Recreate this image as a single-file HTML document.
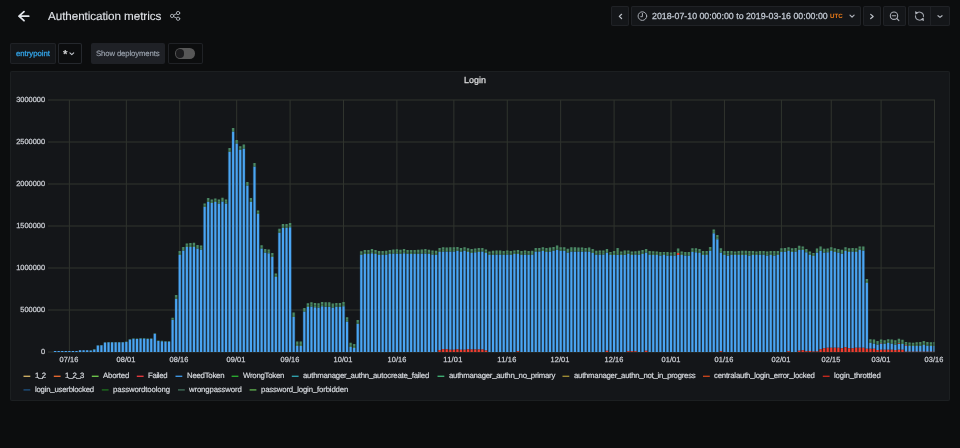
<!DOCTYPE html>
<html lang="en"><head><meta charset="utf-8"><title>Authentication metrics - Grafana</title>
<style>
html,body{margin:0;padding:0;overflow:hidden}
body{width:960px;height:448px;overflow:hidden;position:relative;background:#0c0d0e;font-family:"Liberation Sans",sans-serif;}
.t{position:absolute;white-space:nowrap;will-change:transform;text-rendering:geometricPrecision;}
.b{position:absolute;box-sizing:border-box;}
.t i{font-style:normal;position:relative;top:-0.7px}
svg{position:absolute;left:0;top:0;overflow:visible}
</style></head><body>

<!-- navbar -->
<svg width="960" height="40" viewBox="0 0 960 40" fill="none" stroke-linecap="round" stroke-linejoin="round">
<g stroke="#e4e7ec" stroke-width="1.75"><path d="M28.7 16.2H19M24.0 11.7l-5 4.5 5 4.5"/></g>
<g stroke="#adb1b8" stroke-width="0.95"><circle cx="172.1" cy="15.9" r="1.65"/><circle cx="178.1" cy="13.05" r="1.65"/><circle cx="178.1" cy="18.75" r="1.65"/><path d="M173.7 15.1l2.8-1.35M173.7 16.7l2.8 1.35"/></g>
</svg>
<div class="t" style="font-size:11.7px;line-height:11.7px;top:10.80px;color:#e0e3e8;letter-spacing:-0.080px;-webkit-text-stroke:0.1px #e0e3e8;left:47.80px;"><span id="title">Authentication metrics</span></div>
<div class="b" style="left:611.25px;top:6.00px;width:17.75px;height:20.00px;background:#141619;border-radius:2px;box-shadow:inset 0 0 0 1px #202226;"></div>
<div class="b" style="left:631.25px;top:6.00px;width:229.35px;height:20.00px;background:#141619;border-radius:2px;box-shadow:inset 0 0 0 1px #202226;"></div>
<div class="b" style="left:863.00px;top:6.00px;width:17.60px;height:20.00px;background:#141619;border-radius:2px;box-shadow:inset 0 0 0 1px #202226;"></div>
<div class="b" style="left:883.00px;top:6.00px;width:22.60px;height:20.00px;background:#141619;border-radius:2px;box-shadow:inset 0 0 0 1px #202226;"></div>
<div class="b" style="left:908.00px;top:6.00px;width:41.80px;height:20.00px;background:#141619;border-radius:2px;box-shadow:inset 0 0 0 1px #202226;"></div>
<div class="b" style="left:930.20px;top:6.00px;width:1.00px;height:20.00px;background:#202226;border-radius:0px;"></div>
<div class="t" style="font-size:8.8px;line-height:8.8px;top:11.55px;color:#c4cbd5;letter-spacing:0.003px;-webkit-text-stroke:0.25px #c4cbd5;left:651.75px;"><span id="time">2018-07-10 00:00:00 to 2019-03-16 00:00:00</span></div>
<div class="t" style="font-size:6.2px;line-height:6.2px;top:13.65px;color:#eb7b18;letter-spacing:-0.059px;font-weight:bold;left:829.90px;"><span id="utc">UTC</span></div>
<svg width="960" height="40" viewBox="0 0 960 40" fill="none" stroke-linecap="round" stroke-linejoin="round">
<g stroke="#bcc0c7" stroke-width="1.2"><path d="M621.6 14.3l-2.3 2.1 2.3 2.1"/><path d="M870.7 14.4l2.5 2.05-2.5 2.05"/></g>
<g stroke="#aeb2ba" stroke-width="1.2"><path d="M850 15.1l2.05 2 2.05-2"/><path d="M938.0 15.7l2 1.7 2-1.7"/></g>
<g stroke="#a9adb5" stroke-width="1"><circle cx="642.4" cy="16.1" r="4.3"/><path d="M642.4 13.4v3.3h-1.6"/></g>
<g stroke="#a9adb5" stroke-width="1.1"><circle cx="894" cy="15.7" r="3.7"/><path d="M892.3 15.7h3.4M896.8 18.5l2.1 2.2"/></g>
<g stroke="#9ea2aa" stroke-width="1.1" stroke-linecap="butt"><path d="M916.22 13.81A4 4 0 0 1 923.44 16.79"/><path d="M922.78 18.39A4 4 0 0 1 915.56 15.41"/></g>
<g fill="#b0b4bb" stroke="none"><path d="M915 11.2l3.3 1.3-2.8 2.3z"/><path d="M924 21l-3.3-1.3 2.8-2.3z"/></g>
</svg>
<!-- variables -->
<div class="b" style="left:10.00px;top:43.25px;width:45.60px;height:20.25px;background:#141619;border-radius:2px;box-shadow:inset 0 0 0 1px #202226;"></div>
<div class="b" style="left:57.75px;top:43.25px;width:24.15px;height:20.25px;background:#0c0d0e;border-radius:2px;box-shadow:inset 0 0 0 1px #25282d;"></div>
<div class="b" style="left:91.00px;top:43.25px;width:74.00px;height:20.25px;background:#1f2126;border-radius:2px;"></div>
<div class="b" style="left:167.50px;top:43.25px;width:35.25px;height:20.25px;background:#0c0d0e;border-radius:2px;box-shadow:inset 0 0 0 1px #202226;"></div>
<div class="b" style="left:174.75px;top:48.25px;width:20.50px;height:10.50px;background:#575757;border-radius:5.25px;"></div>
<div class="b" style="left:175.60px;top:49.30px;width:8.40px;height:8.40px;background:#1c1c1e;border-radius:4.2px;"></div>
<div class="t" style="font-size:7.75px;line-height:7.75px;top:49.94px;color:#33a2e5;letter-spacing:-0.005px;-webkit-text-stroke:0.3px #33a2e5;left:15.70px;"><span id="entry">entrypoint</span></div>
<div class="t" style="font-size:11.5px;line-height:11.5px;top:49.57px;color:#d8d9da;letter-spacing:0.000px;-webkit-text-stroke:0.3px #d8d9da;left:63.20px;"><span id="star">*</span></div>
<div class="t" style="font-size:7.75px;line-height:7.75px;top:49.94px;color:#9aa2ad;letter-spacing:-0.126px;-webkit-text-stroke:0.15px #9aa2ad;left:96.10px;"><span id="showdep">Show deployments</span></div>
<svg width="960" height="80" viewBox="0 0 960 80" fill="none" stroke-linecap="round" stroke-linejoin="round">
<path d="M69.9 52.9l1.9 1.7 1.9-1.7" stroke="#c3c7ce" stroke-width="1.1"/></svg>
<!-- panel -->
<div class="b" style="left:10.00px;top:71.00px;width:940.00px;height:330.00px;background:#141619;border-radius:2px;box-shadow:inset 0 0 0 1px #1c1f21;"></div>
<div class="t" style="font-size:8.9px;line-height:8.9px;top:76.47px;color:#d8d9da;letter-spacing:0.008px;-webkit-text-stroke:0.3px #d8d9da;left:374.60px;width:200px;text-align:center;"><span id="ptitle">Login</span></div>
<svg width="960" height="448" viewBox="0 0 960 448">
<g stroke="#30342e" stroke-width="1" fill="none">
<path d="M48.0 100H935.0"/>
<path d="M48.0 142H935.0"/>
<path d="M48.0 184H935.0"/>
<path d="M48.0 226H935.0"/>
<path d="M48.0 268H935.0"/>
<path d="M48.0 310H935.0"/>
<path d="M48.0 352H935.0"/>
<path d="M69.36 100V352"/>
<path d="M126.33 100V352"/>
<path d="M179.73 100V352"/>
<path d="M236.69 100V352"/>
<path d="M290.10 100V352"/>
<path d="M343.50 100V352"/>
<path d="M396.90 100V352"/>
<path d="M453.87 100V352"/>
<path d="M507.27 100V352"/>
<path d="M560.67 100V352"/>
<path d="M614.08 100V352"/>
<path d="M671.04 100V352"/>
<path d="M724.45 100V352"/>
<path d="M781.41 100V352"/>
<path d="M831.25 100V352"/>
<path d="M881.10 100V352"/>
<path d="M934.50 100V352"/>
</g>
<clipPath id="pc"><rect x="48.0" y="90" width="886.40" height="263"/></clipPath>
<g clip-path="url(#pc)">
<g opacity="0.18"><path fill="#4aa5f3" d="M53.34 351.00h3.56V352.00h-3.56zM56.90 351.00h3.56V352.00h-3.56zM60.46 351.00h3.56V352.00h-3.56zM64.02 351.00h3.56V352.00h-3.56zM67.58 351.00h3.56V352.00h-3.56zM71.14 351.00h3.56V352.00h-3.56zM74.70 351.00h3.56V352.00h-3.56zM78.26 350.25h3.56V352.00h-3.56zM81.82 350.25h3.56V352.00h-3.56zM85.38 350.25h3.56V352.00h-3.56zM88.94 350.60h3.56V352.00h-3.56zM92.50 349.45h3.56V352.00h-3.56zM96.06 345.60h3.56V352.00h-3.56zM99.62 345.35h3.56V352.00h-3.56zM103.18 342.60h3.56V352.00h-3.56zM106.74 342.25h3.56V352.00h-3.56zM110.30 342.25h3.56V352.00h-3.56zM113.86 342.35h3.56V352.00h-3.56zM117.42 342.25h3.56V352.00h-3.56zM120.99 342.35h3.56V352.00h-3.56zM124.55 341.95h3.56V352.00h-3.56zM128.11 339.50h3.56V352.00h-3.56zM131.67 338.75h3.56V352.00h-3.56zM135.23 339.00h3.56V352.00h-3.56zM138.79 338.50h3.56V352.00h-3.56zM142.35 338.50h3.56V352.00h-3.56zM145.91 339.10h3.56V352.00h-3.56zM149.47 338.75h3.56V352.00h-3.56zM153.03 333.75h3.56V352.00h-3.56zM156.59 341.00h3.56V352.00h-3.56zM160.15 341.25h3.56V352.00h-3.56zM163.71 341.40h3.56V352.00h-3.56zM167.27 341.50h3.56V352.00h-3.56zM170.83 319.75h3.56V352.00h-3.56zM174.39 298.80h3.56V352.00h-3.56zM177.95 254.90h3.56V352.00h-3.56zM181.51 250.60h3.56V352.00h-3.56zM185.07 247.10h3.56V352.00h-3.56zM188.63 246.90h3.56V352.00h-3.56zM192.19 246.90h3.56V352.00h-3.56zM195.75 248.60h3.56V352.00h-3.56zM199.31 249.40h3.56V352.00h-3.56zM202.87 206.70h3.56V352.00h-3.56zM206.43 201.70h3.56V352.00h-3.56zM209.99 203.05h3.56V352.00h-3.56zM213.55 202.05h3.56V352.00h-3.56zM217.11 203.40h3.56V352.00h-3.56zM220.67 201.40h3.56V352.00h-3.56zM224.23 203.40h3.56V352.00h-3.56zM227.79 151.80h3.56V352.00h-3.56zM231.35 131.40h3.56V352.00h-3.56zM234.91 143.40h3.56V352.00h-3.56zM238.47 149.80h3.56V352.00h-3.56zM242.03 148.50h3.56V352.00h-3.56zM245.59 185.60h3.56V352.00h-3.56zM249.15 201.70h3.56V352.00h-3.56zM252.71 166.50h3.56V352.00h-3.56zM256.27 213.90h3.56V352.00h-3.56zM259.83 248.60h3.56V352.00h-3.56zM263.39 252.40h3.56V352.00h-3.56zM266.95 253.30h3.56V352.00h-3.56zM270.52 256.90h3.56V352.00h-3.56zM274.08 277.10h3.56V352.00h-3.56zM277.64 232.70h3.56V352.00h-3.56zM281.20 227.70h3.56V352.00h-3.56zM284.76 227.70h3.56V352.00h-3.56zM288.32 227.20h3.56V352.00h-3.56zM291.88 316.90h3.56V352.00h-3.56zM295.44 346.10h3.56V352.00h-3.56zM299.00 346.10h3.56V352.00h-3.56zM302.56 311.50h3.56V352.00h-3.56zM306.12 306.90h3.56V352.00h-3.56zM309.68 306.50h3.56V352.00h-3.56zM313.24 307.20h3.56V352.00h-3.56zM316.80 307.50h3.56V352.00h-3.56zM320.36 306.25h3.56V352.00h-3.56zM323.92 306.75h3.56V352.00h-3.56zM327.48 306.75h3.56V352.00h-3.56zM331.04 307.60h3.56V352.00h-3.56zM334.60 306.75h3.56V352.00h-3.56zM338.16 306.75h3.56V352.00h-3.56zM341.72 306.25h3.56V352.00h-3.56zM345.28 321.50h3.56V352.00h-3.56zM348.84 346.90h3.56V352.00h-3.56zM352.40 348.10h3.56V352.00h-3.56zM355.96 323.80h3.56V352.00h-3.56zM359.52 254.75h3.56V352.00h-3.56zM363.08 253.88h3.56V352.00h-3.56zM366.64 253.88h3.56V352.00h-3.56zM370.20 253.25h3.56V352.00h-3.56zM373.76 253.88h3.56V352.00h-3.56zM377.32 254.75h3.56V352.00h-3.56zM380.88 254.75h3.56V352.00h-3.56zM384.44 254.50h3.56V352.00h-3.56zM388.00 253.88h3.56V352.00h-3.56zM391.56 253.50h3.56V352.00h-3.56zM395.12 253.50h3.56V352.00h-3.56zM398.68 253.75h3.56V352.00h-3.56zM402.24 253.25h3.56V352.00h-3.56zM405.80 253.75h3.56V352.00h-3.56zM409.36 253.88h3.56V352.00h-3.56zM412.92 253.75h3.56V352.00h-3.56zM416.49 253.75h3.56V352.00h-3.56zM420.05 253.50h3.56V352.00h-3.56zM423.61 253.50h3.56V352.00h-3.56zM427.17 253.75h3.56V352.00h-3.56zM430.73 254.38h3.56V352.00h-3.56zM434.29 254.75h3.56V352.00h-3.56zM437.85 251.88h3.56V350.10h-3.56zM441.41 251.38h3.56V349.30h-3.56zM444.97 251.62h3.56V349.30h-3.56zM448.53 251.62h3.56V349.80h-3.56zM452.09 251.38h3.56V349.80h-3.56zM455.65 250.75h3.56V349.30h-3.56zM459.21 251.62h3.56V349.80h-3.56zM462.77 250.75h3.56V349.80h-3.56zM466.33 252.00h3.56V349.30h-3.56zM469.89 252.88h3.56V349.60h-3.56zM473.45 252.25h3.56V349.60h-3.56zM477.01 251.88h3.56V349.60h-3.56zM480.57 251.62h3.56V349.60h-3.56zM484.13 252.88h3.56V350.60h-3.56zM487.69 254.75h3.56V352.00h-3.56zM491.25 254.75h3.56V352.00h-3.56zM494.81 254.50h3.56V352.00h-3.56zM498.37 254.50h3.56V352.00h-3.56zM501.93 254.75h3.56V352.00h-3.56zM505.49 254.50h3.56V352.00h-3.56zM509.05 254.75h3.56V352.00h-3.56zM512.61 254.12h3.56V352.00h-3.56zM516.17 253.88h3.56V351.35h-3.56zM519.73 254.75h3.56V352.00h-3.56zM523.29 254.38h3.56V352.00h-3.56zM526.85 254.75h3.56V352.00h-3.56zM530.41 254.50h3.56V352.00h-3.56zM533.97 251.62h3.56V352.00h-3.56zM537.53 251.62h3.56V352.00h-3.56zM541.09 251.00h3.56V352.00h-3.56zM544.65 251.88h3.56V352.00h-3.56zM548.21 251.62h3.56V352.00h-3.56zM551.77 250.75h3.56V352.00h-3.56zM555.33 249.75h3.56V352.00h-3.56zM558.89 250.75h3.56V352.00h-3.56zM562.45 250.75h3.56V352.00h-3.56zM566.02 252.62h3.56V352.00h-3.56zM569.58 251.62h3.56V352.00h-3.56zM573.14 251.62h3.56V352.00h-3.56zM576.70 251.62h3.56V352.00h-3.56zM580.26 251.38h3.56V352.00h-3.56zM583.82 251.62h3.56V352.00h-3.56zM587.38 251.38h3.56V352.00h-3.56zM590.94 252.88h3.56V352.00h-3.56zM594.50 254.75h3.56V352.00h-3.56zM598.06 254.38h3.56V352.00h-3.56zM601.62 254.38h3.56V352.00h-3.56zM605.18 252.62h3.56V350.85h-3.56zM608.74 255.00h3.56V352.00h-3.56zM612.30 255.00h3.56V352.00h-3.56zM615.86 254.75h3.56V352.00h-3.56zM619.42 255.12h3.56V352.00h-3.56zM622.98 254.75h3.56V352.00h-3.56zM626.54 254.12h3.56V351.35h-3.56zM630.10 255.00h3.56V351.35h-3.56zM633.66 254.50h3.56V351.35h-3.56zM637.22 254.38h3.56V352.00h-3.56zM640.78 253.88h3.56V352.00h-3.56zM644.34 252.62h3.56V350.85h-3.56zM647.90 254.75h3.56V352.00h-3.56zM651.46 255.00h3.56V352.00h-3.56zM655.02 255.12h3.56V352.00h-3.56zM658.58 255.38h3.56V352.00h-3.56zM662.14 255.12h3.56V352.00h-3.56zM665.70 255.38h3.56V352.00h-3.56zM669.26 255.62h3.56V352.00h-3.56zM672.82 255.38h3.56V352.00h-3.56zM676.38 255.12h3.56V352.00h-3.56zM679.94 255.00h3.56V352.00h-3.56zM683.50 255.50h3.56V352.00h-3.56zM687.06 255.50h3.56V352.00h-3.56zM690.62 252.00h3.56V352.00h-3.56zM694.18 252.25h3.56V352.00h-3.56zM697.74 252.88h3.56V352.00h-3.56zM701.30 254.88h3.56V352.00h-3.56zM704.86 255.12h3.56V352.00h-3.56zM708.42 250.75h3.56V352.00h-3.56zM711.99 233.25h3.56V352.00h-3.56zM715.55 239.25h3.56V352.00h-3.56zM719.11 252.38h3.56V351.15h-3.56zM722.67 254.88h3.56V352.00h-3.56zM726.23 255.38h3.56V352.00h-3.56zM729.79 254.75h3.56V352.00h-3.56zM733.35 255.12h3.56V352.00h-3.56zM736.91 254.88h3.56V352.00h-3.56zM740.47 254.88h3.56V352.00h-3.56zM744.03 254.88h3.56V352.00h-3.56zM747.59 255.38h3.56V352.00h-3.56zM751.15 255.12h3.56V352.00h-3.56zM754.71 255.12h3.56V352.00h-3.56zM758.27 254.50h3.56V352.00h-3.56zM761.83 254.75h3.56V352.00h-3.56zM765.39 255.50h3.56V352.00h-3.56zM768.95 255.12h3.56V352.00h-3.56zM772.51 255.38h3.56V352.00h-3.56zM776.07 255.12h3.56V352.00h-3.56zM779.63 252.00h3.56V352.00h-3.56zM783.19 251.62h3.56V352.00h-3.56zM786.75 251.00h3.56V351.15h-3.56zM790.31 252.00h3.56V352.00h-3.56zM793.87 251.62h3.56V352.00h-3.56zM797.43 249.75h3.56V350.85h-3.56zM800.99 250.12h3.56V350.35h-3.56zM804.55 252.25h3.56V351.15h-3.56zM808.11 254.75h3.56V350.95h-3.56zM811.67 256.00h3.56V351.55h-3.56zM815.23 252.62h3.56V351.55h-3.56zM818.79 250.75h3.56V349.25h-3.56zM822.35 252.62h3.56V348.25h-3.56zM825.91 252.25h3.56V347.75h-3.56zM829.47 251.00h3.56V347.75h-3.56zM833.03 251.88h3.56V347.75h-3.56zM836.59 252.62h3.56V347.75h-3.56zM840.15 253.50h3.56V348.25h-3.56zM843.71 251.00h3.56V347.35h-3.56zM847.27 252.00h3.56V348.25h-3.56zM850.83 251.62h3.56V348.25h-3.56zM854.39 251.88h3.56V347.75h-3.56zM857.95 250.12h3.56V347.75h-3.56zM861.52 250.62h3.56V347.75h-3.56zM865.08 282.88h3.56V348.75h-3.56zM868.64 342.77h3.56V348.75h-3.56zM872.20 343.50h3.56V348.75h-3.56zM875.76 344.52h3.56V349.95h-3.56zM879.32 343.50h3.56V349.65h-3.56zM882.88 343.79h3.56V349.65h-3.56zM886.44 343.06h3.56V349.65h-3.56zM890.00 343.50h3.56V349.65h-3.56zM893.56 344.52h3.56V349.95h-3.56zM897.12 343.94h3.56V349.65h-3.56zM900.68 343.94h3.56V349.65h-3.56zM904.24 345.40h3.56V351.80h-3.56zM907.80 345.98h3.56V351.80h-3.56zM911.36 345.98h3.56V351.80h-3.56zM914.92 345.98h3.56V351.80h-3.56zM918.48 345.69h3.56V351.80h-3.56zM922.04 344.96h3.56V351.80h-3.56zM925.60 345.69h3.56V351.80h-3.56zM929.16 345.98h3.56V351.80h-3.56zM932.72 345.98h3.56V351.80h-3.56z"/><path fill="#4b8965" d="M88.94 350.25h3.56V350.46h-3.56zM92.50 349.10h3.56V349.31h-3.56zM96.06 345.25h3.56V345.46h-3.56zM99.62 345.00h3.56V345.21h-3.56zM103.18 342.25h3.56V342.46h-3.56zM106.74 341.90h3.56V342.11h-3.56zM110.30 341.90h3.56V342.11h-3.56zM113.86 342.00h3.56V342.21h-3.56zM117.42 341.90h3.56V342.11h-3.56zM120.99 342.00h3.56V342.21h-3.56zM124.55 341.60h3.56V341.81h-3.56zM128.11 339.00h3.56V339.30h-3.56zM131.67 338.25h3.56V338.55h-3.56zM135.23 338.50h3.56V338.80h-3.56zM138.79 338.00h3.56V338.30h-3.56zM142.35 338.00h3.56V338.30h-3.56zM145.91 338.60h3.56V338.90h-3.56zM149.47 338.25h3.56V338.55h-3.56zM153.03 333.25h3.56V333.55h-3.56zM156.59 340.50h3.56V340.80h-3.56zM160.15 340.75h3.56V341.05h-3.56zM163.71 340.90h3.56V341.20h-3.56zM167.27 341.00h3.56V341.30h-3.56zM170.83 317.70h3.56V318.93h-3.56zM174.39 295.10h3.56V297.32h-3.56zM177.95 251.10h3.56V253.38h-3.56zM181.51 246.90h3.56V249.12h-3.56zM185.07 243.60h3.56V245.70h-3.56zM188.63 243.05h3.56V245.36h-3.56zM192.19 242.70h3.56V245.22h-3.56zM195.75 244.90h3.56V247.12h-3.56zM199.31 245.40h3.56V247.80h-3.56zM202.87 203.40h3.56V205.38h-3.56zM206.43 198.00h3.56V200.22h-3.56zM209.99 199.50h3.56V201.63h-3.56zM213.55 198.40h3.56V200.59h-3.56zM217.11 199.50h3.56V201.84h-3.56zM220.67 197.70h3.56V199.92h-3.56zM224.23 199.50h3.56V201.84h-3.56zM227.79 148.10h3.56V150.32h-3.56zM231.35 127.90h3.56V130.00h-3.56zM234.91 140.10h3.56V142.08h-3.56zM238.47 146.30h3.56V148.40h-3.56zM242.03 144.60h3.56V146.94h-3.56zM245.59 181.90h3.56V184.12h-3.56zM249.15 197.90h3.56V200.18h-3.56zM252.71 163.00h3.56V165.10h-3.56zM256.27 210.40h3.56V212.50h-3.56zM259.83 245.20h3.56V247.24h-3.56zM263.39 248.90h3.56V251.00h-3.56zM266.95 249.40h3.56V251.74h-3.56zM270.52 253.10h3.56V255.38h-3.56zM274.08 273.40h3.56V275.62h-3.56zM277.64 228.80h3.56V231.14h-3.56zM281.20 224.00h3.56V226.22h-3.56zM284.76 224.00h3.56V226.22h-3.56zM288.32 223.10h3.56V225.56h-3.56zM291.88 312.40h3.56V315.10h-3.56zM295.44 341.50h3.56V344.26h-3.56zM299.00 341.50h3.56V344.26h-3.56zM302.56 308.00h3.56V310.10h-3.56zM306.12 303.20h3.56V305.42h-3.56zM309.68 302.30h3.56V304.82h-3.56zM313.24 303.00h3.56V305.52h-3.56zM316.80 303.20h3.56V305.78h-3.56zM320.36 302.10h3.56V304.59h-3.56zM323.92 302.20h3.56V304.93h-3.56zM327.48 302.20h3.56V304.93h-3.56zM331.04 303.40h3.56V305.92h-3.56zM334.60 302.90h3.56V305.21h-3.56zM338.16 302.90h3.56V305.21h-3.56zM341.72 302.10h3.56V304.59h-3.56zM345.28 317.30h3.56V319.82h-3.56zM348.84 342.70h3.56V345.22h-3.56zM352.40 343.90h3.56V346.42h-3.56zM355.96 320.10h3.56V322.32h-3.56zM359.52 251.25h3.56V253.35h-3.56zM363.08 250.12h3.56V252.38h-3.56zM366.64 250.12h3.56V252.38h-3.56zM370.20 249.12h3.56V251.60h-3.56zM373.76 250.12h3.56V252.38h-3.56zM377.32 251.00h3.56V253.25h-3.56zM380.88 251.00h3.56V253.25h-3.56zM384.44 250.75h3.56V253.00h-3.56zM388.00 250.12h3.56V252.38h-3.56zM391.56 249.50h3.56V251.90h-3.56zM395.12 249.25h3.56V251.80h-3.56zM398.68 249.75h3.56V252.15h-3.56zM402.24 249.12h3.56V251.60h-3.56zM405.80 250.00h3.56V252.25h-3.56zM409.36 250.12h3.56V252.38h-3.56zM412.92 250.00h3.56V252.25h-3.56zM416.49 249.75h3.56V252.15h-3.56zM420.05 249.50h3.56V251.90h-3.56zM423.61 249.12h3.56V251.75h-3.56zM427.17 249.75h3.56V252.15h-3.56zM430.73 250.38h3.56V252.78h-3.56zM434.29 250.75h3.56V253.15h-3.56zM437.85 248.12h3.56V250.38h-3.56zM441.41 247.25h3.56V249.72h-3.56zM444.97 247.62h3.56V250.03h-3.56zM448.53 247.25h3.56V249.88h-3.56zM452.09 247.25h3.56V249.72h-3.56zM455.65 247.00h3.56V249.25h-3.56zM459.21 248.12h3.56V250.22h-3.56zM462.77 247.25h3.56V249.35h-3.56zM466.33 248.25h3.56V250.50h-3.56zM469.89 249.12h3.56V251.38h-3.56zM473.45 248.50h3.56V250.75h-3.56zM477.01 248.12h3.56V250.38h-3.56zM480.57 248.12h3.56V250.22h-3.56zM484.13 249.38h3.56V251.47h-3.56zM487.69 251.38h3.56V253.40h-3.56zM491.25 250.75h3.56V253.15h-3.56zM494.81 250.62h3.56V252.95h-3.56zM498.37 250.62h3.56V252.95h-3.56zM501.93 251.00h3.56V253.25h-3.56zM505.49 250.38h3.56V252.85h-3.56zM509.05 251.00h3.56V253.25h-3.56zM512.61 250.38h3.56V252.62h-3.56zM516.17 250.00h3.56V252.32h-3.56zM519.73 251.00h3.56V253.25h-3.56zM523.29 250.38h3.56V252.78h-3.56zM526.85 251.00h3.56V253.25h-3.56zM530.41 250.75h3.56V253.00h-3.56zM533.97 248.12h3.56V250.22h-3.56zM537.53 248.12h3.56V250.22h-3.56zM541.09 247.25h3.56V249.50h-3.56zM544.65 247.88h3.56V250.28h-3.56zM548.21 247.50h3.56V249.97h-3.56zM551.77 246.88h3.56V249.20h-3.56zM555.33 245.62h3.56V248.10h-3.56zM558.89 247.25h3.56V249.35h-3.56zM562.45 247.25h3.56V249.35h-3.56zM566.02 248.75h3.56V251.07h-3.56zM569.58 247.25h3.56V249.88h-3.56zM573.14 247.25h3.56V249.88h-3.56zM576.70 247.50h3.56V249.97h-3.56zM580.26 247.50h3.56V249.82h-3.56zM583.82 248.12h3.56V250.22h-3.56zM587.38 247.62h3.56V249.88h-3.56zM590.94 248.88h3.56V251.28h-3.56zM594.50 250.75h3.56V253.15h-3.56zM598.06 250.38h3.56V252.78h-3.56zM601.62 250.38h3.56V252.78h-3.56zM605.18 248.88h3.56V251.12h-3.56zM608.74 251.88h3.56V253.75h-3.56zM612.30 251.00h3.56V253.40h-3.56zM615.86 247.88h3.56V252.00h-3.56zM619.42 251.38h3.56V253.62h-3.56zM622.98 250.62h3.56V253.10h-3.56zM626.54 250.38h3.56V252.62h-3.56zM630.10 251.38h3.56V253.55h-3.56zM633.66 251.25h3.56V253.20h-3.56zM637.22 250.75h3.56V252.93h-3.56zM640.78 250.12h3.56V252.38h-3.56zM644.34 248.88h3.56V251.12h-3.56zM647.90 251.00h3.56V253.25h-3.56zM651.46 251.25h3.56V253.50h-3.56zM655.02 251.62h3.56V253.72h-3.56zM658.58 252.00h3.56V254.03h-3.56zM662.14 251.88h3.56V253.82h-3.56zM665.70 252.00h3.56V254.03h-3.56zM669.26 252.62h3.56V254.43h-3.56zM672.82 251.88h3.56V253.97h-3.56zM676.38 248.50h3.56V251.16h-3.56zM679.94 251.38h3.56V253.55h-3.56zM683.50 252.00h3.56V254.10h-3.56zM687.06 252.00h3.56V254.10h-3.56zM690.62 248.25h3.56V250.50h-3.56zM694.18 248.25h3.56V250.65h-3.56zM697.74 248.88h3.56V251.28h-3.56zM701.30 251.00h3.56V253.32h-3.56zM704.86 251.12h3.56V253.53h-3.56zM708.42 247.00h3.56V249.25h-3.56zM711.99 229.50h3.56V231.75h-3.56zM715.55 235.12h3.56V237.60h-3.56zM719.11 248.25h3.56V250.72h-3.56zM722.67 251.00h3.56V253.32h-3.56zM726.23 251.00h3.56V253.62h-3.56zM729.79 251.00h3.56V253.25h-3.56zM733.35 251.38h3.56V253.62h-3.56zM736.91 251.12h3.56V253.38h-3.56zM740.47 250.75h3.56V253.22h-3.56zM744.03 250.75h3.56V253.22h-3.56zM747.59 251.12h3.56V253.68h-3.56zM751.15 251.00h3.56V253.47h-3.56zM754.71 251.38h3.56V253.62h-3.56zM758.27 251.00h3.56V253.10h-3.56zM761.83 251.00h3.56V253.25h-3.56zM765.39 251.38h3.56V253.85h-3.56zM768.95 251.00h3.56V253.47h-3.56zM772.51 251.12h3.56V253.68h-3.56zM776.07 251.00h3.56V253.47h-3.56zM779.63 248.25h3.56V250.50h-3.56zM783.19 247.88h3.56V250.12h-3.56zM786.75 247.25h3.56V249.50h-3.56zM790.31 248.25h3.56V250.50h-3.56zM793.87 247.88h3.56V250.12h-3.56zM797.43 245.75h3.56V248.15h-3.56zM800.99 246.38h3.56V248.62h-3.56zM804.55 248.88h3.56V250.90h-3.56zM808.11 251.38h3.56V253.40h-3.56zM811.67 252.88h3.56V254.75h-3.56zM815.23 248.50h3.56V250.97h-3.56zM818.79 246.62h3.56V249.10h-3.56zM822.35 248.75h3.56V251.07h-3.56zM825.91 248.50h3.56V250.75h-3.56zM829.47 247.25h3.56V249.50h-3.56zM833.03 248.25h3.56V250.43h-3.56zM836.59 248.88h3.56V251.12h-3.56zM840.15 249.75h3.56V252.00h-3.56zM843.71 247.25h3.56V249.50h-3.56zM847.27 248.25h3.56V250.50h-3.56zM850.83 247.88h3.56V250.12h-3.56zM854.39 248.25h3.56V250.43h-3.56zM857.95 246.38h3.56V248.62h-3.56zM861.52 246.62h3.56V249.03h-3.56zM865.08 279.12h3.56V281.38h-3.56zM868.64 339.13h3.56V341.31h-3.56zM872.20 339.56h3.56V341.93h-3.56zM875.76 341.02h3.56V343.12h-3.56zM879.32 339.56h3.56V341.72h-3.56zM882.88 340.15h3.56V342.33h-3.56zM886.44 339.13h3.56V341.49h-3.56zM890.00 339.56h3.56V341.93h-3.56zM893.56 340.29h3.56V342.83h-3.56zM897.12 338.83h3.56V341.69h-3.56zM900.68 339.85h3.56V342.30h-3.56zM904.24 342.04h3.56V343.84h-3.56zM907.80 342.48h3.56V344.58h-3.56zM911.36 342.77h3.56V344.70h-3.56zM914.92 342.33h3.56V344.52h-3.56zM918.48 342.04h3.56V344.23h-3.56zM922.04 341.02h3.56V343.38h-3.56zM925.60 342.04h3.56V344.23h-3.56zM929.16 342.33h3.56V344.52h-3.56zM932.72 342.04h3.56V344.40h-3.56z"/><path fill="#49855b" d="M88.94 350.46h3.56V350.60h-3.56zM92.50 349.31h3.56V349.45h-3.56zM96.06 345.46h3.56V345.60h-3.56zM99.62 345.21h3.56V345.35h-3.56zM103.18 342.46h3.56V342.60h-3.56zM106.74 342.11h3.56V342.25h-3.56zM110.30 342.11h3.56V342.25h-3.56zM113.86 342.21h3.56V342.35h-3.56zM117.42 342.11h3.56V342.25h-3.56zM120.99 342.21h3.56V342.35h-3.56zM124.55 341.81h3.56V341.95h-3.56zM128.11 339.30h3.56V339.50h-3.56zM131.67 338.55h3.56V338.75h-3.56zM135.23 338.80h3.56V339.00h-3.56zM138.79 338.30h3.56V338.50h-3.56zM142.35 338.30h3.56V338.50h-3.56zM145.91 338.90h3.56V339.10h-3.56zM149.47 338.55h3.56V338.75h-3.56zM153.03 333.55h3.56V333.75h-3.56zM156.59 340.80h3.56V341.00h-3.56zM160.15 341.05h3.56V341.25h-3.56zM163.71 341.20h3.56V341.40h-3.56zM167.27 341.30h3.56V341.50h-3.56zM170.83 318.93h3.56V319.75h-3.56zM174.39 297.32h3.56V298.80h-3.56zM177.95 253.38h3.56V254.90h-3.56zM181.51 249.12h3.56V250.60h-3.56zM185.07 245.70h3.56V247.10h-3.56zM188.63 245.36h3.56V246.90h-3.56zM192.19 245.22h3.56V246.90h-3.56zM195.75 247.12h3.56V248.60h-3.56zM199.31 247.80h3.56V249.40h-3.56zM202.87 205.38h3.56V206.70h-3.56zM206.43 200.22h3.56V201.70h-3.56zM209.99 201.63h3.56V203.05h-3.56zM213.55 200.59h3.56V202.05h-3.56zM217.11 201.84h3.56V203.40h-3.56zM220.67 199.92h3.56V201.40h-3.56zM224.23 201.84h3.56V203.40h-3.56zM227.79 150.32h3.56V151.80h-3.56zM231.35 130.00h3.56V131.40h-3.56zM234.91 142.08h3.56V143.40h-3.56zM238.47 148.40h3.56V149.80h-3.56zM242.03 146.94h3.56V148.50h-3.56zM245.59 184.12h3.56V185.60h-3.56zM249.15 200.18h3.56V201.70h-3.56zM252.71 165.10h3.56V166.50h-3.56zM256.27 212.50h3.56V213.90h-3.56zM259.83 247.24h3.56V248.60h-3.56zM263.39 251.00h3.56V252.40h-3.56zM266.95 251.74h3.56V253.30h-3.56zM270.52 255.38h3.56V256.90h-3.56zM274.08 275.62h3.56V277.10h-3.56zM277.64 231.14h3.56V232.70h-3.56zM281.20 226.22h3.56V227.70h-3.56zM284.76 226.22h3.56V227.70h-3.56zM288.32 225.56h3.56V227.20h-3.56zM291.88 315.10h3.56V316.90h-3.56zM295.44 344.26h3.56V346.10h-3.56zM299.00 344.26h3.56V346.10h-3.56zM302.56 310.10h3.56V311.50h-3.56zM306.12 305.42h3.56V306.90h-3.56zM309.68 304.82h3.56V306.50h-3.56zM313.24 305.52h3.56V307.20h-3.56zM316.80 305.78h3.56V307.50h-3.56zM320.36 304.59h3.56V306.25h-3.56zM323.92 304.93h3.56V306.75h-3.56zM327.48 304.93h3.56V306.75h-3.56zM331.04 305.92h3.56V307.60h-3.56zM334.60 305.21h3.56V306.75h-3.56zM338.16 305.21h3.56V306.75h-3.56zM341.72 304.59h3.56V306.25h-3.56zM345.28 319.82h3.56V321.50h-3.56zM348.84 345.22h3.56V346.90h-3.56zM352.40 346.42h3.56V348.10h-3.56zM355.96 322.32h3.56V323.80h-3.56zM359.52 253.35h3.56V254.75h-3.56zM363.08 252.38h3.56V253.88h-3.56zM366.64 252.38h3.56V253.88h-3.56zM370.20 251.60h3.56V253.25h-3.56zM373.76 252.38h3.56V253.88h-3.56zM377.32 253.25h3.56V254.75h-3.56zM380.88 253.25h3.56V254.75h-3.56zM384.44 253.00h3.56V254.50h-3.56zM388.00 252.38h3.56V253.88h-3.56zM391.56 251.90h3.56V253.50h-3.56zM395.12 251.80h3.56V253.50h-3.56zM398.68 252.15h3.56V253.75h-3.56zM402.24 251.60h3.56V253.25h-3.56zM405.80 252.25h3.56V253.75h-3.56zM409.36 252.38h3.56V253.88h-3.56zM412.92 252.25h3.56V253.75h-3.56zM416.49 252.15h3.56V253.75h-3.56zM420.05 251.90h3.56V253.50h-3.56zM423.61 251.75h3.56V253.50h-3.56zM427.17 252.15h3.56V253.75h-3.56zM430.73 252.78h3.56V254.38h-3.56zM434.29 253.15h3.56V254.75h-3.56zM437.85 250.38h3.56V251.88h-3.56zM441.41 249.72h3.56V251.38h-3.56zM444.97 250.03h3.56V251.62h-3.56zM448.53 249.88h3.56V251.62h-3.56zM452.09 249.72h3.56V251.38h-3.56zM455.65 249.25h3.56V250.75h-3.56zM459.21 250.22h3.56V251.62h-3.56zM462.77 249.35h3.56V250.75h-3.56zM466.33 250.50h3.56V252.00h-3.56zM469.89 251.38h3.56V252.88h-3.56zM473.45 250.75h3.56V252.25h-3.56zM477.01 250.38h3.56V251.88h-3.56zM480.57 250.22h3.56V251.62h-3.56zM484.13 251.47h3.56V252.88h-3.56zM487.69 253.40h3.56V254.75h-3.56zM491.25 253.15h3.56V254.75h-3.56zM494.81 252.95h3.56V254.50h-3.56zM498.37 252.95h3.56V254.50h-3.56zM501.93 253.25h3.56V254.75h-3.56zM505.49 252.85h3.56V254.50h-3.56zM509.05 253.25h3.56V254.75h-3.56zM512.61 252.62h3.56V254.12h-3.56zM516.17 252.32h3.56V253.88h-3.56zM519.73 253.25h3.56V254.75h-3.56zM523.29 252.78h3.56V254.38h-3.56zM526.85 253.25h3.56V254.75h-3.56zM530.41 253.00h3.56V254.50h-3.56zM533.97 250.22h3.56V251.62h-3.56zM537.53 250.22h3.56V251.62h-3.56zM541.09 249.50h3.56V251.00h-3.56zM544.65 250.28h3.56V251.88h-3.56zM548.21 249.97h3.56V251.62h-3.56zM551.77 249.20h3.56V250.75h-3.56zM555.33 248.10h3.56V249.75h-3.56zM558.89 249.35h3.56V250.75h-3.56zM562.45 249.35h3.56V250.75h-3.56zM566.02 251.07h3.56V252.62h-3.56zM569.58 249.88h3.56V251.62h-3.56zM573.14 249.88h3.56V251.62h-3.56zM576.70 249.97h3.56V251.62h-3.56zM580.26 249.82h3.56V251.38h-3.56zM583.82 250.22h3.56V251.62h-3.56zM587.38 249.88h3.56V251.38h-3.56zM590.94 251.28h3.56V252.88h-3.56zM594.50 253.15h3.56V254.75h-3.56zM598.06 252.78h3.56V254.38h-3.56zM601.62 252.78h3.56V254.38h-3.56zM605.18 251.12h3.56V252.62h-3.56zM608.74 253.75h3.56V255.00h-3.56zM612.30 253.40h3.56V255.00h-3.56zM615.86 252.00h3.56V254.75h-3.56zM619.42 253.62h3.56V255.12h-3.56zM622.98 253.10h3.56V254.75h-3.56zM626.54 252.62h3.56V254.12h-3.56zM630.10 253.55h3.56V255.00h-3.56zM633.66 253.20h3.56V254.50h-3.56zM637.22 252.93h3.56V254.38h-3.56zM640.78 252.38h3.56V253.88h-3.56zM644.34 251.12h3.56V252.62h-3.56zM647.90 253.25h3.56V254.75h-3.56zM651.46 253.50h3.56V255.00h-3.56zM655.02 253.72h3.56V255.12h-3.56zM658.58 254.03h3.56V255.38h-3.56zM662.14 253.82h3.56V255.12h-3.56zM665.70 254.03h3.56V255.38h-3.56zM669.26 254.43h3.56V255.62h-3.56zM672.82 253.97h3.56V255.38h-3.56zM676.38 251.16h3.56V252.93h-3.56zM679.94 253.55h3.56V255.00h-3.56zM683.50 254.10h3.56V255.50h-3.56zM687.06 254.10h3.56V255.50h-3.56zM690.62 250.50h3.56V252.00h-3.56zM694.18 250.65h3.56V252.25h-3.56zM697.74 251.28h3.56V252.88h-3.56zM701.30 253.32h3.56V254.88h-3.56zM704.86 253.53h3.56V255.12h-3.56zM708.42 249.25h3.56V250.75h-3.56zM711.99 231.75h3.56V233.25h-3.56zM715.55 237.60h3.56V239.25h-3.56zM719.11 250.72h3.56V252.38h-3.56zM722.67 253.32h3.56V254.88h-3.56zM726.23 253.62h3.56V255.38h-3.56zM729.79 253.25h3.56V254.75h-3.56zM733.35 253.62h3.56V255.12h-3.56zM736.91 253.38h3.56V254.88h-3.56zM740.47 253.22h3.56V254.88h-3.56zM744.03 253.22h3.56V254.88h-3.56zM747.59 253.68h3.56V255.38h-3.56zM751.15 253.47h3.56V255.12h-3.56zM754.71 253.62h3.56V255.12h-3.56zM758.27 253.10h3.56V254.50h-3.56zM761.83 253.25h3.56V254.75h-3.56zM765.39 253.85h3.56V255.50h-3.56zM768.95 253.47h3.56V255.12h-3.56zM772.51 253.68h3.56V255.38h-3.56zM776.07 253.47h3.56V255.12h-3.56zM779.63 250.50h3.56V252.00h-3.56zM783.19 250.12h3.56V251.62h-3.56zM786.75 249.50h3.56V251.00h-3.56zM790.31 250.50h3.56V252.00h-3.56zM793.87 250.12h3.56V251.62h-3.56zM797.43 248.15h3.56V249.75h-3.56zM800.99 248.62h3.56V250.12h-3.56zM804.55 250.90h3.56V252.25h-3.56zM808.11 253.40h3.56V254.75h-3.56zM811.67 254.75h3.56V256.00h-3.56zM815.23 250.97h3.56V252.62h-3.56zM818.79 249.10h3.56V250.75h-3.56zM822.35 251.07h3.56V252.62h-3.56zM825.91 250.75h3.56V252.25h-3.56zM829.47 249.50h3.56V251.00h-3.56zM833.03 250.43h3.56V251.88h-3.56zM836.59 251.12h3.56V252.62h-3.56zM840.15 252.00h3.56V253.50h-3.56zM843.71 249.50h3.56V251.00h-3.56zM847.27 250.50h3.56V252.00h-3.56zM850.83 250.12h3.56V251.62h-3.56zM854.39 250.43h3.56V251.88h-3.56zM857.95 248.62h3.56V250.12h-3.56zM861.52 249.03h3.56V250.62h-3.56zM865.08 281.38h3.56V282.88h-3.56zM868.64 341.31h3.56V342.77h-3.56zM872.20 341.93h3.56V343.50h-3.56zM875.76 343.12h3.56V344.52h-3.56zM879.32 341.72h3.56V343.15h-3.56zM882.88 342.33h3.56V343.79h-3.56zM886.44 341.49h3.56V343.06h-3.56zM890.00 341.93h3.56V343.50h-3.56zM893.56 342.83h3.56V344.52h-3.56zM897.12 341.69h3.56V343.59h-3.56zM900.68 342.30h3.56V343.94h-3.56zM904.24 343.84h3.56V345.05h-3.56zM907.80 344.58h3.56V345.98h-3.56zM911.36 344.70h3.56V345.98h-3.56zM914.92 344.52h3.56V345.98h-3.56zM918.48 344.23h3.56V345.69h-3.56zM922.04 343.38h3.56V344.96h-3.56zM925.60 344.23h3.56V345.69h-3.56zM929.16 344.52h3.56V345.98h-3.56zM932.72 344.40h3.56V345.98h-3.56z"/><path fill="#f03d31" d="M437.85 350.10h3.56V352.0h-3.56zM441.41 349.30h3.56V352.0h-3.56zM444.97 349.30h3.56V352.0h-3.56zM448.53 349.80h3.56V352.0h-3.56zM452.09 349.80h3.56V352.0h-3.56zM455.65 349.30h3.56V352.0h-3.56zM459.21 349.80h3.56V352.0h-3.56zM462.77 349.80h3.56V352.0h-3.56zM466.33 349.30h3.56V352.0h-3.56zM469.89 349.60h3.56V352.0h-3.56zM473.45 349.60h3.56V352.0h-3.56zM477.01 349.60h3.56V352.0h-3.56zM480.57 349.60h3.56V352.0h-3.56zM484.13 350.60h3.56V352.0h-3.56zM516.17 351.35h3.56V352.0h-3.56zM605.18 350.85h3.56V352.0h-3.56zM626.54 351.35h3.56V352.0h-3.56zM630.10 351.35h3.56V352.0h-3.56zM633.66 351.35h3.56V352.0h-3.56zM644.34 350.85h3.56V352.0h-3.56zM676.38 252.93h3.56V255.12h-3.56zM719.11 351.15h3.56V352.0h-3.56zM786.75 351.15h3.56V352.0h-3.56zM797.43 350.85h3.56V352.0h-3.56zM800.99 350.35h3.56V352.0h-3.56zM804.55 351.15h3.56V352.0h-3.56zM808.11 350.95h3.56V352.0h-3.56zM811.67 351.55h3.56V352.0h-3.56zM815.23 351.55h3.56V352.0h-3.56zM818.79 349.25h3.56V352.0h-3.56zM822.35 348.25h3.56V352.0h-3.56zM825.91 347.75h3.56V352.0h-3.56zM829.47 347.75h3.56V352.0h-3.56zM833.03 347.75h3.56V352.0h-3.56zM836.59 347.75h3.56V352.0h-3.56zM840.15 348.25h3.56V352.0h-3.56zM843.71 347.35h3.56V352.0h-3.56zM847.27 348.25h3.56V352.0h-3.56zM850.83 348.25h3.56V352.0h-3.56zM854.39 347.75h3.56V352.0h-3.56zM857.95 347.75h3.56V352.0h-3.56zM861.52 347.75h3.56V352.0h-3.56zM865.08 348.75h3.56V352.0h-3.56zM868.64 348.75h3.56V352.0h-3.56zM872.20 348.75h3.56V352.0h-3.56zM875.76 349.95h3.56V352.0h-3.56zM879.32 349.65h3.56V352.0h-3.56zM879.32 343.15h3.56V343.50h-3.56zM882.88 349.65h3.56V352.0h-3.56zM886.44 349.65h3.56V352.0h-3.56zM890.00 349.65h3.56V352.0h-3.56zM893.56 349.95h3.56V352.0h-3.56zM897.12 349.65h3.56V352.0h-3.56zM897.12 343.59h3.56V343.94h-3.56zM900.68 349.65h3.56V352.0h-3.56zM904.24 351.80h3.56V352.0h-3.56zM904.24 345.05h3.56V345.40h-3.56zM907.80 351.80h3.56V352.0h-3.56zM911.36 351.80h3.56V352.0h-3.56zM914.92 351.80h3.56V352.0h-3.56zM918.48 351.80h3.56V352.0h-3.56zM922.04 351.80h3.56V352.0h-3.56zM925.60 351.80h3.56V352.0h-3.56zM929.16 351.80h3.56V352.0h-3.56zM932.72 351.80h3.56V352.0h-3.56z"/></g>
<g><path fill="#4aa5f3" d="M54.05 351.00h2.15V352.00h-2.15zM57.61 351.00h2.15V352.00h-2.15zM61.17 351.00h2.15V352.00h-2.15zM64.73 351.00h2.15V352.00h-2.15zM68.29 351.00h2.15V352.00h-2.15zM71.85 351.00h2.15V352.00h-2.15zM75.41 351.00h2.15V352.00h-2.15zM78.97 350.25h2.15V352.00h-2.15zM82.53 350.25h2.15V352.00h-2.15zM86.09 350.25h2.15V352.00h-2.15zM89.65 350.60h2.15V352.00h-2.15zM93.21 349.45h2.15V352.00h-2.15zM96.77 345.60h2.15V352.00h-2.15zM100.33 345.35h2.15V352.00h-2.15zM103.89 342.60h2.15V352.00h-2.15zM107.45 342.25h2.15V352.00h-2.15zM111.01 342.25h2.15V352.00h-2.15zM114.57 342.35h2.15V352.00h-2.15zM118.13 342.25h2.15V352.00h-2.15zM121.69 342.35h2.15V352.00h-2.15zM125.25 341.95h2.15V352.00h-2.15zM128.81 339.50h2.15V352.00h-2.15zM132.37 338.75h2.15V352.00h-2.15zM135.93 339.00h2.15V352.00h-2.15zM139.49 338.50h2.15V352.00h-2.15zM143.05 338.50h2.15V352.00h-2.15zM146.61 339.10h2.15V352.00h-2.15zM150.17 338.75h2.15V352.00h-2.15zM153.73 333.75h2.15V352.00h-2.15zM157.29 341.00h2.15V352.00h-2.15zM160.85 341.25h2.15V352.00h-2.15zM164.41 341.40h2.15V352.00h-2.15zM167.97 341.50h2.15V352.00h-2.15zM171.53 319.75h2.15V352.00h-2.15zM175.09 298.80h2.15V352.00h-2.15zM178.65 254.90h2.15V352.00h-2.15zM182.21 250.60h2.15V352.00h-2.15zM185.77 247.10h2.15V352.00h-2.15zM189.33 246.90h2.15V352.00h-2.15zM192.89 246.90h2.15V352.00h-2.15zM196.46 248.60h2.15V352.00h-2.15zM200.02 249.40h2.15V352.00h-2.15zM203.58 206.70h2.15V352.00h-2.15zM207.14 201.70h2.15V352.00h-2.15zM210.70 203.05h2.15V352.00h-2.15zM214.26 202.05h2.15V352.00h-2.15zM217.82 203.40h2.15V352.00h-2.15zM221.38 201.40h2.15V352.00h-2.15zM224.94 203.40h2.15V352.00h-2.15zM228.50 151.80h2.15V352.00h-2.15zM232.06 131.40h2.15V352.00h-2.15zM235.62 143.40h2.15V352.00h-2.15zM239.18 149.80h2.15V352.00h-2.15zM242.74 148.50h2.15V352.00h-2.15zM246.30 185.60h2.15V352.00h-2.15zM249.86 201.70h2.15V352.00h-2.15zM253.42 166.50h2.15V352.00h-2.15zM256.98 213.90h2.15V352.00h-2.15zM260.54 248.60h2.15V352.00h-2.15zM264.10 252.40h2.15V352.00h-2.15zM267.66 253.30h2.15V352.00h-2.15zM271.22 256.90h2.15V352.00h-2.15zM274.78 277.10h2.15V352.00h-2.15zM278.34 232.70h2.15V352.00h-2.15zM281.90 227.70h2.15V352.00h-2.15zM285.46 227.70h2.15V352.00h-2.15zM289.02 227.20h2.15V352.00h-2.15zM292.58 316.90h2.15V352.00h-2.15zM296.14 346.10h2.15V352.00h-2.15zM299.70 346.10h2.15V352.00h-2.15zM303.26 311.50h2.15V352.00h-2.15zM306.82 306.90h2.15V352.00h-2.15zM310.38 306.50h2.15V352.00h-2.15zM313.94 307.20h2.15V352.00h-2.15zM317.50 307.50h2.15V352.00h-2.15zM321.06 306.25h2.15V352.00h-2.15zM324.62 306.75h2.15V352.00h-2.15zM328.18 306.75h2.15V352.00h-2.15zM331.74 307.60h2.15V352.00h-2.15zM335.30 306.75h2.15V352.00h-2.15zM338.86 306.75h2.15V352.00h-2.15zM342.43 306.25h2.15V352.00h-2.15zM345.99 321.50h2.15V352.00h-2.15zM349.55 346.90h2.15V352.00h-2.15zM353.11 348.10h2.15V352.00h-2.15zM356.67 323.80h2.15V352.00h-2.15zM360.23 254.75h2.15V352.00h-2.15zM363.79 253.88h2.15V352.00h-2.15zM367.35 253.88h2.15V352.00h-2.15zM370.91 253.25h2.15V352.00h-2.15zM374.47 253.88h2.15V352.00h-2.15zM378.03 254.75h2.15V352.00h-2.15zM381.59 254.75h2.15V352.00h-2.15zM385.15 254.50h2.15V352.00h-2.15zM388.71 253.88h2.15V352.00h-2.15zM392.27 253.50h2.15V352.00h-2.15zM395.83 253.50h2.15V352.00h-2.15zM399.39 253.75h2.15V352.00h-2.15zM402.95 253.25h2.15V352.00h-2.15zM406.51 253.75h2.15V352.00h-2.15zM410.07 253.88h2.15V352.00h-2.15zM413.63 253.75h2.15V352.00h-2.15zM417.19 253.75h2.15V352.00h-2.15zM420.75 253.50h2.15V352.00h-2.15zM424.31 253.50h2.15V352.00h-2.15zM427.87 253.75h2.15V352.00h-2.15zM431.43 254.38h2.15V352.00h-2.15zM434.99 254.75h2.15V352.00h-2.15zM438.55 251.88h2.15V350.10h-2.15zM442.11 251.38h2.15V349.30h-2.15zM445.67 251.62h2.15V349.30h-2.15zM449.23 251.62h2.15V349.80h-2.15zM452.79 251.38h2.15V349.80h-2.15zM456.35 250.75h2.15V349.30h-2.15zM459.91 251.62h2.15V349.80h-2.15zM463.47 250.75h2.15V349.80h-2.15zM467.03 252.00h2.15V349.30h-2.15zM470.59 252.88h2.15V349.60h-2.15zM474.15 252.25h2.15V349.60h-2.15zM477.71 251.88h2.15V349.60h-2.15zM481.27 251.62h2.15V349.60h-2.15zM484.83 252.88h2.15V350.60h-2.15zM488.39 254.75h2.15V352.00h-2.15zM491.96 254.75h2.15V352.00h-2.15zM495.52 254.50h2.15V352.00h-2.15zM499.08 254.50h2.15V352.00h-2.15zM502.64 254.75h2.15V352.00h-2.15zM506.20 254.50h2.15V352.00h-2.15zM509.76 254.75h2.15V352.00h-2.15zM513.32 254.12h2.15V352.00h-2.15zM516.88 253.88h2.15V351.35h-2.15zM520.44 254.75h2.15V352.00h-2.15zM524.00 254.38h2.15V352.00h-2.15zM527.56 254.75h2.15V352.00h-2.15zM531.12 254.50h2.15V352.00h-2.15zM534.68 251.62h2.15V352.00h-2.15zM538.24 251.62h2.15V352.00h-2.15zM541.80 251.00h2.15V352.00h-2.15zM545.36 251.88h2.15V352.00h-2.15zM548.92 251.62h2.15V352.00h-2.15zM552.48 250.75h2.15V352.00h-2.15zM556.04 249.75h2.15V352.00h-2.15zM559.60 250.75h2.15V352.00h-2.15zM563.16 250.75h2.15V352.00h-2.15zM566.72 252.62h2.15V352.00h-2.15zM570.28 251.62h2.15V352.00h-2.15zM573.84 251.62h2.15V352.00h-2.15zM577.40 251.62h2.15V352.00h-2.15zM580.96 251.38h2.15V352.00h-2.15zM584.52 251.62h2.15V352.00h-2.15zM588.08 251.38h2.15V352.00h-2.15zM591.64 252.88h2.15V352.00h-2.15zM595.20 254.75h2.15V352.00h-2.15zM598.76 254.38h2.15V352.00h-2.15zM602.32 254.38h2.15V352.00h-2.15zM605.88 252.62h2.15V350.85h-2.15zM609.44 255.00h2.15V352.00h-2.15zM613.00 255.00h2.15V352.00h-2.15zM616.56 254.75h2.15V352.00h-2.15zM620.12 255.12h2.15V352.00h-2.15zM623.68 254.75h2.15V352.00h-2.15zM627.24 254.12h2.15V351.35h-2.15zM630.80 255.00h2.15V351.35h-2.15zM634.36 254.50h2.15V351.35h-2.15zM637.92 254.38h2.15V352.00h-2.15zM641.49 253.88h2.15V352.00h-2.15zM645.05 252.62h2.15V350.85h-2.15zM648.61 254.75h2.15V352.00h-2.15zM652.17 255.00h2.15V352.00h-2.15zM655.73 255.12h2.15V352.00h-2.15zM659.29 255.38h2.15V352.00h-2.15zM662.85 255.12h2.15V352.00h-2.15zM666.41 255.38h2.15V352.00h-2.15zM669.97 255.62h2.15V352.00h-2.15zM673.53 255.38h2.15V352.00h-2.15zM677.09 255.12h2.15V352.00h-2.15zM680.65 255.00h2.15V352.00h-2.15zM684.21 255.50h2.15V352.00h-2.15zM687.77 255.50h2.15V352.00h-2.15zM691.33 252.00h2.15V352.00h-2.15zM694.89 252.25h2.15V352.00h-2.15zM698.45 252.88h2.15V352.00h-2.15zM702.01 254.88h2.15V352.00h-2.15zM705.57 255.12h2.15V352.00h-2.15zM709.13 250.75h2.15V352.00h-2.15zM712.69 233.25h2.15V352.00h-2.15zM716.25 239.25h2.15V352.00h-2.15zM719.81 252.38h2.15V351.15h-2.15zM723.37 254.88h2.15V352.00h-2.15zM726.93 255.38h2.15V352.00h-2.15zM730.49 254.75h2.15V352.00h-2.15zM734.05 255.12h2.15V352.00h-2.15zM737.61 254.88h2.15V352.00h-2.15zM741.17 254.88h2.15V352.00h-2.15zM744.73 254.88h2.15V352.00h-2.15zM748.29 255.38h2.15V352.00h-2.15zM751.85 255.12h2.15V352.00h-2.15zM755.41 255.12h2.15V352.00h-2.15zM758.97 254.50h2.15V352.00h-2.15zM762.53 254.75h2.15V352.00h-2.15zM766.09 255.50h2.15V352.00h-2.15zM769.65 255.12h2.15V352.00h-2.15zM773.21 255.38h2.15V352.00h-2.15zM776.77 255.12h2.15V352.00h-2.15zM780.33 252.00h2.15V352.00h-2.15zM783.89 251.62h2.15V352.00h-2.15zM787.46 251.00h2.15V351.15h-2.15zM791.02 252.00h2.15V352.00h-2.15zM794.58 251.62h2.15V352.00h-2.15zM798.14 249.75h2.15V350.85h-2.15zM801.70 250.12h2.15V350.35h-2.15zM805.26 252.25h2.15V351.15h-2.15zM808.82 254.75h2.15V350.95h-2.15zM812.38 256.00h2.15V351.55h-2.15zM815.94 252.62h2.15V351.55h-2.15zM819.50 250.75h2.15V349.25h-2.15zM823.06 252.62h2.15V348.25h-2.15zM826.62 252.25h2.15V347.75h-2.15zM830.18 251.00h2.15V347.75h-2.15zM833.74 251.88h2.15V347.75h-2.15zM837.30 252.62h2.15V347.75h-2.15zM840.86 253.50h2.15V348.25h-2.15zM844.42 251.00h2.15V347.35h-2.15zM847.98 252.00h2.15V348.25h-2.15zM851.54 251.62h2.15V348.25h-2.15zM855.10 251.88h2.15V347.75h-2.15zM858.66 250.12h2.15V347.75h-2.15zM862.22 250.62h2.15V347.75h-2.15zM865.78 282.88h2.15V348.75h-2.15zM869.34 342.77h2.15V348.75h-2.15zM872.90 343.50h2.15V348.75h-2.15zM876.46 344.52h2.15V349.95h-2.15zM880.02 343.50h2.15V349.65h-2.15zM883.58 343.79h2.15V349.65h-2.15zM887.14 343.06h2.15V349.65h-2.15zM890.70 343.50h2.15V349.65h-2.15zM894.26 344.52h2.15V349.95h-2.15zM897.82 343.94h2.15V349.65h-2.15zM901.38 343.94h2.15V349.65h-2.15zM904.94 345.40h2.15V351.80h-2.15zM908.50 345.98h2.15V351.80h-2.15zM912.06 345.98h2.15V351.80h-2.15zM915.62 345.98h2.15V351.80h-2.15zM919.18 345.69h2.15V351.80h-2.15zM922.74 344.96h2.15V351.80h-2.15zM926.30 345.69h2.15V351.80h-2.15zM929.86 345.98h2.15V351.80h-2.15zM933.42 345.98h2.15V351.80h-2.15z"/><path fill="#4b8965" d="M89.65 350.25h2.15V350.46h-2.15zM93.21 349.10h2.15V349.31h-2.15zM96.77 345.25h2.15V345.46h-2.15zM100.33 345.00h2.15V345.21h-2.15zM103.89 342.25h2.15V342.46h-2.15zM107.45 341.90h2.15V342.11h-2.15zM111.01 341.90h2.15V342.11h-2.15zM114.57 342.00h2.15V342.21h-2.15zM118.13 341.90h2.15V342.11h-2.15zM121.69 342.00h2.15V342.21h-2.15zM125.25 341.60h2.15V341.81h-2.15zM128.81 339.00h2.15V339.30h-2.15zM132.37 338.25h2.15V338.55h-2.15zM135.93 338.50h2.15V338.80h-2.15zM139.49 338.00h2.15V338.30h-2.15zM143.05 338.00h2.15V338.30h-2.15zM146.61 338.60h2.15V338.90h-2.15zM150.17 338.25h2.15V338.55h-2.15zM153.73 333.25h2.15V333.55h-2.15zM157.29 340.50h2.15V340.80h-2.15zM160.85 340.75h2.15V341.05h-2.15zM164.41 340.90h2.15V341.20h-2.15zM167.97 341.00h2.15V341.30h-2.15zM171.53 317.70h2.15V318.93h-2.15zM175.09 295.10h2.15V297.32h-2.15zM178.65 251.10h2.15V253.38h-2.15zM182.21 246.90h2.15V249.12h-2.15zM185.77 243.60h2.15V245.70h-2.15zM189.33 243.05h2.15V245.36h-2.15zM192.89 242.70h2.15V245.22h-2.15zM196.46 244.90h2.15V247.12h-2.15zM200.02 245.40h2.15V247.80h-2.15zM203.58 203.40h2.15V205.38h-2.15zM207.14 198.00h2.15V200.22h-2.15zM210.70 199.50h2.15V201.63h-2.15zM214.26 198.40h2.15V200.59h-2.15zM217.82 199.50h2.15V201.84h-2.15zM221.38 197.70h2.15V199.92h-2.15zM224.94 199.50h2.15V201.84h-2.15zM228.50 148.10h2.15V150.32h-2.15zM232.06 127.90h2.15V130.00h-2.15zM235.62 140.10h2.15V142.08h-2.15zM239.18 146.30h2.15V148.40h-2.15zM242.74 144.60h2.15V146.94h-2.15zM246.30 181.90h2.15V184.12h-2.15zM249.86 197.90h2.15V200.18h-2.15zM253.42 163.00h2.15V165.10h-2.15zM256.98 210.40h2.15V212.50h-2.15zM260.54 245.20h2.15V247.24h-2.15zM264.10 248.90h2.15V251.00h-2.15zM267.66 249.40h2.15V251.74h-2.15zM271.22 253.10h2.15V255.38h-2.15zM274.78 273.40h2.15V275.62h-2.15zM278.34 228.80h2.15V231.14h-2.15zM281.90 224.00h2.15V226.22h-2.15zM285.46 224.00h2.15V226.22h-2.15zM289.02 223.10h2.15V225.56h-2.15zM292.58 312.40h2.15V315.10h-2.15zM296.14 341.50h2.15V344.26h-2.15zM299.70 341.50h2.15V344.26h-2.15zM303.26 308.00h2.15V310.10h-2.15zM306.82 303.20h2.15V305.42h-2.15zM310.38 302.30h2.15V304.82h-2.15zM313.94 303.00h2.15V305.52h-2.15zM317.50 303.20h2.15V305.78h-2.15zM321.06 302.10h2.15V304.59h-2.15zM324.62 302.20h2.15V304.93h-2.15zM328.18 302.20h2.15V304.93h-2.15zM331.74 303.40h2.15V305.92h-2.15zM335.30 302.90h2.15V305.21h-2.15zM338.86 302.90h2.15V305.21h-2.15zM342.43 302.10h2.15V304.59h-2.15zM345.99 317.30h2.15V319.82h-2.15zM349.55 342.70h2.15V345.22h-2.15zM353.11 343.90h2.15V346.42h-2.15zM356.67 320.10h2.15V322.32h-2.15zM360.23 251.25h2.15V253.35h-2.15zM363.79 250.12h2.15V252.38h-2.15zM367.35 250.12h2.15V252.38h-2.15zM370.91 249.12h2.15V251.60h-2.15zM374.47 250.12h2.15V252.38h-2.15zM378.03 251.00h2.15V253.25h-2.15zM381.59 251.00h2.15V253.25h-2.15zM385.15 250.75h2.15V253.00h-2.15zM388.71 250.12h2.15V252.38h-2.15zM392.27 249.50h2.15V251.90h-2.15zM395.83 249.25h2.15V251.80h-2.15zM399.39 249.75h2.15V252.15h-2.15zM402.95 249.12h2.15V251.60h-2.15zM406.51 250.00h2.15V252.25h-2.15zM410.07 250.12h2.15V252.38h-2.15zM413.63 250.00h2.15V252.25h-2.15zM417.19 249.75h2.15V252.15h-2.15zM420.75 249.50h2.15V251.90h-2.15zM424.31 249.12h2.15V251.75h-2.15zM427.87 249.75h2.15V252.15h-2.15zM431.43 250.38h2.15V252.78h-2.15zM434.99 250.75h2.15V253.15h-2.15zM438.55 248.12h2.15V250.38h-2.15zM442.11 247.25h2.15V249.72h-2.15zM445.67 247.62h2.15V250.03h-2.15zM449.23 247.25h2.15V249.88h-2.15zM452.79 247.25h2.15V249.72h-2.15zM456.35 247.00h2.15V249.25h-2.15zM459.91 248.12h2.15V250.22h-2.15zM463.47 247.25h2.15V249.35h-2.15zM467.03 248.25h2.15V250.50h-2.15zM470.59 249.12h2.15V251.38h-2.15zM474.15 248.50h2.15V250.75h-2.15zM477.71 248.12h2.15V250.38h-2.15zM481.27 248.12h2.15V250.22h-2.15zM484.83 249.38h2.15V251.47h-2.15zM488.39 251.38h2.15V253.40h-2.15zM491.96 250.75h2.15V253.15h-2.15zM495.52 250.62h2.15V252.95h-2.15zM499.08 250.62h2.15V252.95h-2.15zM502.64 251.00h2.15V253.25h-2.15zM506.20 250.38h2.15V252.85h-2.15zM509.76 251.00h2.15V253.25h-2.15zM513.32 250.38h2.15V252.62h-2.15zM516.88 250.00h2.15V252.32h-2.15zM520.44 251.00h2.15V253.25h-2.15zM524.00 250.38h2.15V252.78h-2.15zM527.56 251.00h2.15V253.25h-2.15zM531.12 250.75h2.15V253.00h-2.15zM534.68 248.12h2.15V250.22h-2.15zM538.24 248.12h2.15V250.22h-2.15zM541.80 247.25h2.15V249.50h-2.15zM545.36 247.88h2.15V250.28h-2.15zM548.92 247.50h2.15V249.97h-2.15zM552.48 246.88h2.15V249.20h-2.15zM556.04 245.62h2.15V248.10h-2.15zM559.60 247.25h2.15V249.35h-2.15zM563.16 247.25h2.15V249.35h-2.15zM566.72 248.75h2.15V251.07h-2.15zM570.28 247.25h2.15V249.88h-2.15zM573.84 247.25h2.15V249.88h-2.15zM577.40 247.50h2.15V249.97h-2.15zM580.96 247.50h2.15V249.82h-2.15zM584.52 248.12h2.15V250.22h-2.15zM588.08 247.62h2.15V249.88h-2.15zM591.64 248.88h2.15V251.28h-2.15zM595.20 250.75h2.15V253.15h-2.15zM598.76 250.38h2.15V252.78h-2.15zM602.32 250.38h2.15V252.78h-2.15zM605.88 248.88h2.15V251.12h-2.15zM609.44 251.88h2.15V253.75h-2.15zM613.00 251.00h2.15V253.40h-2.15zM616.56 247.88h2.15V252.00h-2.15zM620.12 251.38h2.15V253.62h-2.15zM623.68 250.62h2.15V253.10h-2.15zM627.24 250.38h2.15V252.62h-2.15zM630.80 251.38h2.15V253.55h-2.15zM634.36 251.25h2.15V253.20h-2.15zM637.92 250.75h2.15V252.93h-2.15zM641.49 250.12h2.15V252.38h-2.15zM645.05 248.88h2.15V251.12h-2.15zM648.61 251.00h2.15V253.25h-2.15zM652.17 251.25h2.15V253.50h-2.15zM655.73 251.62h2.15V253.72h-2.15zM659.29 252.00h2.15V254.03h-2.15zM662.85 251.88h2.15V253.82h-2.15zM666.41 252.00h2.15V254.03h-2.15zM669.97 252.62h2.15V254.43h-2.15zM673.53 251.88h2.15V253.97h-2.15zM677.09 248.50h2.15V251.16h-2.15zM680.65 251.38h2.15V253.55h-2.15zM684.21 252.00h2.15V254.10h-2.15zM687.77 252.00h2.15V254.10h-2.15zM691.33 248.25h2.15V250.50h-2.15zM694.89 248.25h2.15V250.65h-2.15zM698.45 248.88h2.15V251.28h-2.15zM702.01 251.00h2.15V253.32h-2.15zM705.57 251.12h2.15V253.53h-2.15zM709.13 247.00h2.15V249.25h-2.15zM712.69 229.50h2.15V231.75h-2.15zM716.25 235.12h2.15V237.60h-2.15zM719.81 248.25h2.15V250.72h-2.15zM723.37 251.00h2.15V253.32h-2.15zM726.93 251.00h2.15V253.62h-2.15zM730.49 251.00h2.15V253.25h-2.15zM734.05 251.38h2.15V253.62h-2.15zM737.61 251.12h2.15V253.38h-2.15zM741.17 250.75h2.15V253.22h-2.15zM744.73 250.75h2.15V253.22h-2.15zM748.29 251.12h2.15V253.68h-2.15zM751.85 251.00h2.15V253.47h-2.15zM755.41 251.38h2.15V253.62h-2.15zM758.97 251.00h2.15V253.10h-2.15zM762.53 251.00h2.15V253.25h-2.15zM766.09 251.38h2.15V253.85h-2.15zM769.65 251.00h2.15V253.47h-2.15zM773.21 251.12h2.15V253.68h-2.15zM776.77 251.00h2.15V253.47h-2.15zM780.33 248.25h2.15V250.50h-2.15zM783.89 247.88h2.15V250.12h-2.15zM787.46 247.25h2.15V249.50h-2.15zM791.02 248.25h2.15V250.50h-2.15zM794.58 247.88h2.15V250.12h-2.15zM798.14 245.75h2.15V248.15h-2.15zM801.70 246.38h2.15V248.62h-2.15zM805.26 248.88h2.15V250.90h-2.15zM808.82 251.38h2.15V253.40h-2.15zM812.38 252.88h2.15V254.75h-2.15zM815.94 248.50h2.15V250.97h-2.15zM819.50 246.62h2.15V249.10h-2.15zM823.06 248.75h2.15V251.07h-2.15zM826.62 248.50h2.15V250.75h-2.15zM830.18 247.25h2.15V249.50h-2.15zM833.74 248.25h2.15V250.43h-2.15zM837.30 248.88h2.15V251.12h-2.15zM840.86 249.75h2.15V252.00h-2.15zM844.42 247.25h2.15V249.50h-2.15zM847.98 248.25h2.15V250.50h-2.15zM851.54 247.88h2.15V250.12h-2.15zM855.10 248.25h2.15V250.43h-2.15zM858.66 246.38h2.15V248.62h-2.15zM862.22 246.62h2.15V249.03h-2.15zM865.78 279.12h2.15V281.38h-2.15zM869.34 339.13h2.15V341.31h-2.15zM872.90 339.56h2.15V341.93h-2.15zM876.46 341.02h2.15V343.12h-2.15zM880.02 339.56h2.15V341.72h-2.15zM883.58 340.15h2.15V342.33h-2.15zM887.14 339.13h2.15V341.49h-2.15zM890.70 339.56h2.15V341.93h-2.15zM894.26 340.29h2.15V342.83h-2.15zM897.82 338.83h2.15V341.69h-2.15zM901.38 339.85h2.15V342.30h-2.15zM904.94 342.04h2.15V343.84h-2.15zM908.50 342.48h2.15V344.58h-2.15zM912.06 342.77h2.15V344.70h-2.15zM915.62 342.33h2.15V344.52h-2.15zM919.18 342.04h2.15V344.23h-2.15zM922.74 341.02h2.15V343.38h-2.15zM926.30 342.04h2.15V344.23h-2.15zM929.86 342.33h2.15V344.52h-2.15zM933.42 342.04h2.15V344.40h-2.15z"/><path fill="#49855b" d="M89.65 350.46h2.15V350.60h-2.15zM93.21 349.31h2.15V349.45h-2.15zM96.77 345.46h2.15V345.60h-2.15zM100.33 345.21h2.15V345.35h-2.15zM103.89 342.46h2.15V342.60h-2.15zM107.45 342.11h2.15V342.25h-2.15zM111.01 342.11h2.15V342.25h-2.15zM114.57 342.21h2.15V342.35h-2.15zM118.13 342.11h2.15V342.25h-2.15zM121.69 342.21h2.15V342.35h-2.15zM125.25 341.81h2.15V341.95h-2.15zM128.81 339.30h2.15V339.50h-2.15zM132.37 338.55h2.15V338.75h-2.15zM135.93 338.80h2.15V339.00h-2.15zM139.49 338.30h2.15V338.50h-2.15zM143.05 338.30h2.15V338.50h-2.15zM146.61 338.90h2.15V339.10h-2.15zM150.17 338.55h2.15V338.75h-2.15zM153.73 333.55h2.15V333.75h-2.15zM157.29 340.80h2.15V341.00h-2.15zM160.85 341.05h2.15V341.25h-2.15zM164.41 341.20h2.15V341.40h-2.15zM167.97 341.30h2.15V341.50h-2.15zM171.53 318.93h2.15V319.75h-2.15zM175.09 297.32h2.15V298.80h-2.15zM178.65 253.38h2.15V254.90h-2.15zM182.21 249.12h2.15V250.60h-2.15zM185.77 245.70h2.15V247.10h-2.15zM189.33 245.36h2.15V246.90h-2.15zM192.89 245.22h2.15V246.90h-2.15zM196.46 247.12h2.15V248.60h-2.15zM200.02 247.80h2.15V249.40h-2.15zM203.58 205.38h2.15V206.70h-2.15zM207.14 200.22h2.15V201.70h-2.15zM210.70 201.63h2.15V203.05h-2.15zM214.26 200.59h2.15V202.05h-2.15zM217.82 201.84h2.15V203.40h-2.15zM221.38 199.92h2.15V201.40h-2.15zM224.94 201.84h2.15V203.40h-2.15zM228.50 150.32h2.15V151.80h-2.15zM232.06 130.00h2.15V131.40h-2.15zM235.62 142.08h2.15V143.40h-2.15zM239.18 148.40h2.15V149.80h-2.15zM242.74 146.94h2.15V148.50h-2.15zM246.30 184.12h2.15V185.60h-2.15zM249.86 200.18h2.15V201.70h-2.15zM253.42 165.10h2.15V166.50h-2.15zM256.98 212.50h2.15V213.90h-2.15zM260.54 247.24h2.15V248.60h-2.15zM264.10 251.00h2.15V252.40h-2.15zM267.66 251.74h2.15V253.30h-2.15zM271.22 255.38h2.15V256.90h-2.15zM274.78 275.62h2.15V277.10h-2.15zM278.34 231.14h2.15V232.70h-2.15zM281.90 226.22h2.15V227.70h-2.15zM285.46 226.22h2.15V227.70h-2.15zM289.02 225.56h2.15V227.20h-2.15zM292.58 315.10h2.15V316.90h-2.15zM296.14 344.26h2.15V346.10h-2.15zM299.70 344.26h2.15V346.10h-2.15zM303.26 310.10h2.15V311.50h-2.15zM306.82 305.42h2.15V306.90h-2.15zM310.38 304.82h2.15V306.50h-2.15zM313.94 305.52h2.15V307.20h-2.15zM317.50 305.78h2.15V307.50h-2.15zM321.06 304.59h2.15V306.25h-2.15zM324.62 304.93h2.15V306.75h-2.15zM328.18 304.93h2.15V306.75h-2.15zM331.74 305.92h2.15V307.60h-2.15zM335.30 305.21h2.15V306.75h-2.15zM338.86 305.21h2.15V306.75h-2.15zM342.43 304.59h2.15V306.25h-2.15zM345.99 319.82h2.15V321.50h-2.15zM349.55 345.22h2.15V346.90h-2.15zM353.11 346.42h2.15V348.10h-2.15zM356.67 322.32h2.15V323.80h-2.15zM360.23 253.35h2.15V254.75h-2.15zM363.79 252.38h2.15V253.88h-2.15zM367.35 252.38h2.15V253.88h-2.15zM370.91 251.60h2.15V253.25h-2.15zM374.47 252.38h2.15V253.88h-2.15zM378.03 253.25h2.15V254.75h-2.15zM381.59 253.25h2.15V254.75h-2.15zM385.15 253.00h2.15V254.50h-2.15zM388.71 252.38h2.15V253.88h-2.15zM392.27 251.90h2.15V253.50h-2.15zM395.83 251.80h2.15V253.50h-2.15zM399.39 252.15h2.15V253.75h-2.15zM402.95 251.60h2.15V253.25h-2.15zM406.51 252.25h2.15V253.75h-2.15zM410.07 252.38h2.15V253.88h-2.15zM413.63 252.25h2.15V253.75h-2.15zM417.19 252.15h2.15V253.75h-2.15zM420.75 251.90h2.15V253.50h-2.15zM424.31 251.75h2.15V253.50h-2.15zM427.87 252.15h2.15V253.75h-2.15zM431.43 252.78h2.15V254.38h-2.15zM434.99 253.15h2.15V254.75h-2.15zM438.55 250.38h2.15V251.88h-2.15zM442.11 249.72h2.15V251.38h-2.15zM445.67 250.03h2.15V251.62h-2.15zM449.23 249.88h2.15V251.62h-2.15zM452.79 249.72h2.15V251.38h-2.15zM456.35 249.25h2.15V250.75h-2.15zM459.91 250.22h2.15V251.62h-2.15zM463.47 249.35h2.15V250.75h-2.15zM467.03 250.50h2.15V252.00h-2.15zM470.59 251.38h2.15V252.88h-2.15zM474.15 250.75h2.15V252.25h-2.15zM477.71 250.38h2.15V251.88h-2.15zM481.27 250.22h2.15V251.62h-2.15zM484.83 251.47h2.15V252.88h-2.15zM488.39 253.40h2.15V254.75h-2.15zM491.96 253.15h2.15V254.75h-2.15zM495.52 252.95h2.15V254.50h-2.15zM499.08 252.95h2.15V254.50h-2.15zM502.64 253.25h2.15V254.75h-2.15zM506.20 252.85h2.15V254.50h-2.15zM509.76 253.25h2.15V254.75h-2.15zM513.32 252.62h2.15V254.12h-2.15zM516.88 252.32h2.15V253.88h-2.15zM520.44 253.25h2.15V254.75h-2.15zM524.00 252.78h2.15V254.38h-2.15zM527.56 253.25h2.15V254.75h-2.15zM531.12 253.00h2.15V254.50h-2.15zM534.68 250.22h2.15V251.62h-2.15zM538.24 250.22h2.15V251.62h-2.15zM541.80 249.50h2.15V251.00h-2.15zM545.36 250.28h2.15V251.88h-2.15zM548.92 249.97h2.15V251.62h-2.15zM552.48 249.20h2.15V250.75h-2.15zM556.04 248.10h2.15V249.75h-2.15zM559.60 249.35h2.15V250.75h-2.15zM563.16 249.35h2.15V250.75h-2.15zM566.72 251.07h2.15V252.62h-2.15zM570.28 249.88h2.15V251.62h-2.15zM573.84 249.88h2.15V251.62h-2.15zM577.40 249.97h2.15V251.62h-2.15zM580.96 249.82h2.15V251.38h-2.15zM584.52 250.22h2.15V251.62h-2.15zM588.08 249.88h2.15V251.38h-2.15zM591.64 251.28h2.15V252.88h-2.15zM595.20 253.15h2.15V254.75h-2.15zM598.76 252.78h2.15V254.38h-2.15zM602.32 252.78h2.15V254.38h-2.15zM605.88 251.12h2.15V252.62h-2.15zM609.44 253.75h2.15V255.00h-2.15zM613.00 253.40h2.15V255.00h-2.15zM616.56 252.00h2.15V254.75h-2.15zM620.12 253.62h2.15V255.12h-2.15zM623.68 253.10h2.15V254.75h-2.15zM627.24 252.62h2.15V254.12h-2.15zM630.80 253.55h2.15V255.00h-2.15zM634.36 253.20h2.15V254.50h-2.15zM637.92 252.93h2.15V254.38h-2.15zM641.49 252.38h2.15V253.88h-2.15zM645.05 251.12h2.15V252.62h-2.15zM648.61 253.25h2.15V254.75h-2.15zM652.17 253.50h2.15V255.00h-2.15zM655.73 253.72h2.15V255.12h-2.15zM659.29 254.03h2.15V255.38h-2.15zM662.85 253.82h2.15V255.12h-2.15zM666.41 254.03h2.15V255.38h-2.15zM669.97 254.43h2.15V255.62h-2.15zM673.53 253.97h2.15V255.38h-2.15zM677.09 251.16h2.15V252.93h-2.15zM680.65 253.55h2.15V255.00h-2.15zM684.21 254.10h2.15V255.50h-2.15zM687.77 254.10h2.15V255.50h-2.15zM691.33 250.50h2.15V252.00h-2.15zM694.89 250.65h2.15V252.25h-2.15zM698.45 251.28h2.15V252.88h-2.15zM702.01 253.32h2.15V254.88h-2.15zM705.57 253.53h2.15V255.12h-2.15zM709.13 249.25h2.15V250.75h-2.15zM712.69 231.75h2.15V233.25h-2.15zM716.25 237.60h2.15V239.25h-2.15zM719.81 250.72h2.15V252.38h-2.15zM723.37 253.32h2.15V254.88h-2.15zM726.93 253.62h2.15V255.38h-2.15zM730.49 253.25h2.15V254.75h-2.15zM734.05 253.62h2.15V255.12h-2.15zM737.61 253.38h2.15V254.88h-2.15zM741.17 253.22h2.15V254.88h-2.15zM744.73 253.22h2.15V254.88h-2.15zM748.29 253.68h2.15V255.38h-2.15zM751.85 253.47h2.15V255.12h-2.15zM755.41 253.62h2.15V255.12h-2.15zM758.97 253.10h2.15V254.50h-2.15zM762.53 253.25h2.15V254.75h-2.15zM766.09 253.85h2.15V255.50h-2.15zM769.65 253.47h2.15V255.12h-2.15zM773.21 253.68h2.15V255.38h-2.15zM776.77 253.47h2.15V255.12h-2.15zM780.33 250.50h2.15V252.00h-2.15zM783.89 250.12h2.15V251.62h-2.15zM787.46 249.50h2.15V251.00h-2.15zM791.02 250.50h2.15V252.00h-2.15zM794.58 250.12h2.15V251.62h-2.15zM798.14 248.15h2.15V249.75h-2.15zM801.70 248.62h2.15V250.12h-2.15zM805.26 250.90h2.15V252.25h-2.15zM808.82 253.40h2.15V254.75h-2.15zM812.38 254.75h2.15V256.00h-2.15zM815.94 250.97h2.15V252.62h-2.15zM819.50 249.10h2.15V250.75h-2.15zM823.06 251.07h2.15V252.62h-2.15zM826.62 250.75h2.15V252.25h-2.15zM830.18 249.50h2.15V251.00h-2.15zM833.74 250.43h2.15V251.88h-2.15zM837.30 251.12h2.15V252.62h-2.15zM840.86 252.00h2.15V253.50h-2.15zM844.42 249.50h2.15V251.00h-2.15zM847.98 250.50h2.15V252.00h-2.15zM851.54 250.12h2.15V251.62h-2.15zM855.10 250.43h2.15V251.88h-2.15zM858.66 248.62h2.15V250.12h-2.15zM862.22 249.03h2.15V250.62h-2.15zM865.78 281.38h2.15V282.88h-2.15zM869.34 341.31h2.15V342.77h-2.15zM872.90 341.93h2.15V343.50h-2.15zM876.46 343.12h2.15V344.52h-2.15zM880.02 341.72h2.15V343.15h-2.15zM883.58 342.33h2.15V343.79h-2.15zM887.14 341.49h2.15V343.06h-2.15zM890.70 341.93h2.15V343.50h-2.15zM894.26 342.83h2.15V344.52h-2.15zM897.82 341.69h2.15V343.59h-2.15zM901.38 342.30h2.15V343.94h-2.15zM904.94 343.84h2.15V345.05h-2.15zM908.50 344.58h2.15V345.98h-2.15zM912.06 344.70h2.15V345.98h-2.15zM915.62 344.52h2.15V345.98h-2.15zM919.18 344.23h2.15V345.69h-2.15zM922.74 343.38h2.15V344.96h-2.15zM926.30 344.23h2.15V345.69h-2.15zM929.86 344.52h2.15V345.98h-2.15zM933.42 344.40h2.15V345.98h-2.15z"/><path fill="#f03d31" d="M438.55 350.10h2.15V352.0h-2.15zM442.11 349.30h2.15V352.0h-2.15zM445.67 349.30h2.15V352.0h-2.15zM449.23 349.80h2.15V352.0h-2.15zM452.79 349.80h2.15V352.0h-2.15zM456.35 349.30h2.15V352.0h-2.15zM459.91 349.80h2.15V352.0h-2.15zM463.47 349.80h2.15V352.0h-2.15zM467.03 349.30h2.15V352.0h-2.15zM470.59 349.60h2.15V352.0h-2.15zM474.15 349.60h2.15V352.0h-2.15zM477.71 349.60h2.15V352.0h-2.15zM481.27 349.60h2.15V352.0h-2.15zM484.83 350.60h2.15V352.0h-2.15zM516.88 351.35h2.15V352.0h-2.15zM605.88 350.85h2.15V352.0h-2.15zM627.24 351.35h2.15V352.0h-2.15zM630.80 351.35h2.15V352.0h-2.15zM634.36 351.35h2.15V352.0h-2.15zM645.05 350.85h2.15V352.0h-2.15zM677.09 252.93h2.15V255.12h-2.15zM719.81 351.15h2.15V352.0h-2.15zM787.46 351.15h2.15V352.0h-2.15zM798.14 350.85h2.15V352.0h-2.15zM801.70 350.35h2.15V352.0h-2.15zM805.26 351.15h2.15V352.0h-2.15zM808.82 350.95h2.15V352.0h-2.15zM812.38 351.55h2.15V352.0h-2.15zM815.94 351.55h2.15V352.0h-2.15zM819.50 349.25h2.15V352.0h-2.15zM823.06 348.25h2.15V352.0h-2.15zM826.62 347.75h2.15V352.0h-2.15zM830.18 347.75h2.15V352.0h-2.15zM833.74 347.75h2.15V352.0h-2.15zM837.30 347.75h2.15V352.0h-2.15zM840.86 348.25h2.15V352.0h-2.15zM844.42 347.35h2.15V352.0h-2.15zM847.98 348.25h2.15V352.0h-2.15zM851.54 348.25h2.15V352.0h-2.15zM855.10 347.75h2.15V352.0h-2.15zM858.66 347.75h2.15V352.0h-2.15zM862.22 347.75h2.15V352.0h-2.15zM865.78 348.75h2.15V352.0h-2.15zM869.34 348.75h2.15V352.0h-2.15zM872.90 348.75h2.15V352.0h-2.15zM876.46 349.95h2.15V352.0h-2.15zM880.02 349.65h2.15V352.0h-2.15zM880.02 343.15h2.15V343.50h-2.15zM883.58 349.65h2.15V352.0h-2.15zM887.14 349.65h2.15V352.0h-2.15zM890.70 349.65h2.15V352.0h-2.15zM894.26 349.95h2.15V352.0h-2.15zM897.82 349.65h2.15V352.0h-2.15zM897.82 343.59h2.15V343.94h-2.15zM901.38 349.65h2.15V352.0h-2.15zM904.94 351.80h2.15V352.0h-2.15zM904.94 345.05h2.15V345.40h-2.15zM908.50 351.80h2.15V352.0h-2.15zM912.06 351.80h2.15V352.0h-2.15zM915.62 351.80h2.15V352.0h-2.15zM919.18 351.80h2.15V352.0h-2.15zM922.74 351.80h2.15V352.0h-2.15zM926.30 351.80h2.15V352.0h-2.15zM929.86 351.80h2.15V352.0h-2.15zM933.42 351.80h2.15V352.0h-2.15z"/></g>
</g>
<rect x="23.50" y="375.60" width="6.8" height="1.4" fill="#c9ab62"/>
<rect x="53.80" y="375.60" width="6.8" height="1.4" fill="#e2672f"/>
<rect x="91.80" y="375.60" width="6.8" height="1.4" fill="#6cc24a"/>
<rect x="136.80" y="375.60" width="6.8" height="1.4" fill="#e2393d"/>
<rect x="175.50" y="375.60" width="6.8" height="1.4" fill="#3d93de"/>
<rect x="231.60" y="375.60" width="6.8" height="1.4" fill="#2aa82f"/>
<rect x="291.80" y="375.60" width="6.8" height="1.4" fill="#2f9fab"/>
<rect x="437.50" y="375.60" width="6.8" height="1.4" fill="#3fae73"/>
<rect x="562.50" y="375.60" width="6.8" height="1.4" fill="#9c8a33"/>
<rect x="703.00" y="375.60" width="6.8" height="1.4" fill="#c4431b"/>
<rect x="822.80" y="375.60" width="6.8" height="1.4" fill="#c3281d"/>
<rect x="23.50" y="389.20" width="6.8" height="1.4" fill="#1f4f7d"/>
<rect x="101.80" y="389.20" width="6.8" height="1.4" fill="#1e6b1f"/>
<rect x="178.00" y="389.20" width="6.8" height="1.4" fill="#3f6b56"/>
<rect x="249.60" y="389.20" width="6.8" height="1.4" fill="#5ba84c"/>
</svg>
<div class="t" style="font-size:7.4px;line-height:7.4px;top:95.59px;color:#c9ccd2;letter-spacing:0.000px;-webkit-text-stroke:0.25px #c9ccd2;left:-154.90px;width:200px;text-align:right;"><span id="y0">3000000</span></div>
<div class="t" style="font-size:7.4px;line-height:7.4px;top:137.59px;color:#c9ccd2;letter-spacing:0.000px;-webkit-text-stroke:0.25px #c9ccd2;left:-154.90px;width:200px;text-align:right;"><span id="y1">2500000</span></div>
<div class="t" style="font-size:7.4px;line-height:7.4px;top:179.59px;color:#c9ccd2;letter-spacing:0.000px;-webkit-text-stroke:0.25px #c9ccd2;left:-154.90px;width:200px;text-align:right;"><span id="y2">2000000</span></div>
<div class="t" style="font-size:7.4px;line-height:7.4px;top:221.59px;color:#c9ccd2;letter-spacing:0.000px;-webkit-text-stroke:0.25px #c9ccd2;left:-154.90px;width:200px;text-align:right;"><span id="y3">1500000</span></div>
<div class="t" style="font-size:7.4px;line-height:7.4px;top:263.59px;color:#c9ccd2;letter-spacing:0.000px;-webkit-text-stroke:0.25px #c9ccd2;left:-154.90px;width:200px;text-align:right;"><span id="y4">1000000</span></div>
<div class="t" style="font-size:7.4px;line-height:7.4px;top:305.59px;color:#c9ccd2;letter-spacing:0.000px;-webkit-text-stroke:0.25px #c9ccd2;left:-154.90px;width:200px;text-align:right;"><span id="y5">500000</span></div>
<div class="t" style="font-size:7.4px;line-height:7.4px;top:347.59px;color:#c9ccd2;letter-spacing:0.000px;-webkit-text-stroke:0.25px #c9ccd2;left:-154.90px;width:200px;text-align:right;"><span id="y6">0</span></div>
<div class="t" style="font-size:7.4px;line-height:7.4px;top:356.14px;color:#c9ccd2;letter-spacing:0.125px;-webkit-text-stroke:0.25px #c9ccd2;left:-31.04px;width:200px;text-align:center;"><span id="x0">07/16</span></div>
<div class="t" style="font-size:7.4px;line-height:7.4px;top:356.14px;color:#c9ccd2;letter-spacing:0.125px;-webkit-text-stroke:0.25px #c9ccd2;left:25.93px;width:200px;text-align:center;"><span id="x1">08/01</span></div>
<div class="t" style="font-size:7.4px;line-height:7.4px;top:356.14px;color:#c9ccd2;letter-spacing:0.125px;-webkit-text-stroke:0.25px #c9ccd2;left:79.33px;width:200px;text-align:center;"><span id="x2">08/16</span></div>
<div class="t" style="font-size:7.4px;line-height:7.4px;top:356.14px;color:#c9ccd2;letter-spacing:0.125px;-webkit-text-stroke:0.25px #c9ccd2;left:136.29px;width:200px;text-align:center;"><span id="x3">09/01</span></div>
<div class="t" style="font-size:7.4px;line-height:7.4px;top:356.14px;color:#c9ccd2;letter-spacing:0.125px;-webkit-text-stroke:0.25px #c9ccd2;left:189.70px;width:200px;text-align:center;"><span id="x4">09/16</span></div>
<div class="t" style="font-size:7.4px;line-height:7.4px;top:356.14px;color:#c9ccd2;letter-spacing:0.125px;-webkit-text-stroke:0.25px #c9ccd2;left:243.10px;width:200px;text-align:center;"><span id="x5">10/01</span></div>
<div class="t" style="font-size:7.4px;line-height:7.4px;top:356.14px;color:#c9ccd2;letter-spacing:0.125px;-webkit-text-stroke:0.25px #c9ccd2;left:296.50px;width:200px;text-align:center;"><span id="x6">10/16</span></div>
<div class="t" style="font-size:7.4px;line-height:7.4px;top:356.14px;color:#c9ccd2;letter-spacing:0.262px;-webkit-text-stroke:0.25px #c9ccd2;left:353.47px;width:200px;text-align:center;"><span id="x7">11/01</span></div>
<div class="t" style="font-size:7.4px;line-height:7.4px;top:356.14px;color:#c9ccd2;letter-spacing:0.262px;-webkit-text-stroke:0.25px #c9ccd2;left:406.87px;width:200px;text-align:center;"><span id="x8">11/16</span></div>
<div class="t" style="font-size:7.4px;line-height:7.4px;top:356.14px;color:#c9ccd2;letter-spacing:0.125px;-webkit-text-stroke:0.25px #c9ccd2;left:460.27px;width:200px;text-align:center;"><span id="x9">12/01</span></div>
<div class="t" style="font-size:7.4px;line-height:7.4px;top:356.14px;color:#c9ccd2;letter-spacing:0.125px;-webkit-text-stroke:0.25px #c9ccd2;left:513.68px;width:200px;text-align:center;"><span id="x10">12/16</span></div>
<div class="t" style="font-size:7.4px;line-height:7.4px;top:356.14px;color:#c9ccd2;letter-spacing:0.125px;-webkit-text-stroke:0.25px #c9ccd2;left:570.64px;width:200px;text-align:center;"><span id="x11">01/01</span></div>
<div class="t" style="font-size:7.4px;line-height:7.4px;top:356.14px;color:#c9ccd2;letter-spacing:0.125px;-webkit-text-stroke:0.25px #c9ccd2;left:624.05px;width:200px;text-align:center;"><span id="x12">01/16</span></div>
<div class="t" style="font-size:7.4px;line-height:7.4px;top:356.14px;color:#c9ccd2;letter-spacing:0.125px;-webkit-text-stroke:0.25px #c9ccd2;left:681.01px;width:200px;text-align:center;"><span id="x13">02/01</span></div>
<div class="t" style="font-size:7.4px;line-height:7.4px;top:356.14px;color:#c9ccd2;letter-spacing:0.125px;-webkit-text-stroke:0.25px #c9ccd2;left:730.85px;width:200px;text-align:center;"><span id="x14">02/15</span></div>
<div class="t" style="font-size:7.4px;line-height:7.4px;top:356.14px;color:#c9ccd2;letter-spacing:0.125px;-webkit-text-stroke:0.25px #c9ccd2;left:780.70px;width:200px;text-align:center;"><span id="x15">03/01</span></div>
<div class="t" style="font-size:7.4px;line-height:7.4px;top:356.14px;color:#c9ccd2;letter-spacing:0.125px;-webkit-text-stroke:0.25px #c9ccd2;left:834.10px;width:200px;text-align:center;"><span id="x16">03/16</span></div>
<div class="t" style="font-size:7.75px;line-height:7.75px;top:372.34px;color:#d3d6db;letter-spacing:-0.919px;-webkit-text-stroke:0.22px #d3d6db;left:34.70px;"><span id="lg0">1<i>_</i>2</span></div>
<div class="t" style="font-size:7.75px;line-height:7.75px;top:372.34px;color:#d3d6db;letter-spacing:-0.591px;-webkit-text-stroke:0.22px #d3d6db;left:65.00px;"><span id="lg1">1<i>_</i>2<i>_</i>3</span></div>
<div class="t" style="font-size:7.75px;line-height:7.75px;top:372.34px;color:#d3d6db;letter-spacing:-0.159px;-webkit-text-stroke:0.22px #d3d6db;left:103.00px;"><span id="lg2">Aborted</span></div>
<div class="t" style="font-size:7.75px;line-height:7.75px;top:372.34px;color:#d3d6db;letter-spacing:-0.322px;-webkit-text-stroke:0.22px #d3d6db;left:148.00px;"><span id="lg3">Failed</span></div>
<div class="t" style="font-size:7.75px;line-height:7.75px;top:372.34px;color:#d3d6db;letter-spacing:-0.215px;-webkit-text-stroke:0.22px #d3d6db;left:186.70px;"><span id="lg4">NeedToken</span></div>
<div class="t" style="font-size:7.75px;line-height:7.75px;top:372.34px;color:#d3d6db;letter-spacing:-0.219px;-webkit-text-stroke:0.22px #d3d6db;left:242.80px;"><span id="lg5">WrongToken</span></div>
<div class="t" style="font-size:7.75px;line-height:7.75px;top:372.34px;color:#d3d6db;letter-spacing:-0.205px;-webkit-text-stroke:0.22px #d3d6db;left:303.00px;"><span id="lg6">authmanager<i>_</i>authn<i>_</i>autocreate<i>_</i>failed</span></div>
<div class="t" style="font-size:7.75px;line-height:7.75px;top:372.34px;color:#d3d6db;letter-spacing:-0.229px;-webkit-text-stroke:0.22px #d3d6db;left:448.70px;"><span id="lg7">authmanager<i>_</i>authn<i>_</i>no<i>_</i>primary</span></div>
<div class="t" style="font-size:7.75px;line-height:7.75px;top:372.34px;color:#d3d6db;letter-spacing:-0.241px;-webkit-text-stroke:0.22px #d3d6db;left:573.70px;"><span id="lg8">authmanager<i>_</i>authn<i>_</i>not<i>_</i>in<i>_</i>progress</span></div>
<div class="t" style="font-size:7.75px;line-height:7.75px;top:372.34px;color:#d3d6db;letter-spacing:-0.195px;-webkit-text-stroke:0.22px #d3d6db;left:714.20px;"><span id="lg9">centralauth<i>_</i>login<i>_</i>error<i>_</i>locked</span></div>
<div class="t" style="font-size:7.75px;line-height:7.75px;top:372.34px;color:#d3d6db;letter-spacing:-0.136px;-webkit-text-stroke:0.22px #d3d6db;left:834.00px;"><span id="lg10">login<i>_</i>throttled</span></div>
<div class="t" style="font-size:7.75px;line-height:7.75px;top:385.74px;color:#d3d6db;letter-spacing:-0.212px;-webkit-text-stroke:0.22px #d3d6db;left:34.70px;"><span id="lg11">login<i>_</i>userblocked</span></div>
<div class="t" style="font-size:7.75px;line-height:7.75px;top:385.74px;color:#d3d6db;letter-spacing:-0.115px;-webkit-text-stroke:0.22px #d3d6db;left:113.00px;"><span id="lg12">passwordtoolong</span></div>
<div class="t" style="font-size:7.75px;line-height:7.75px;top:385.74px;color:#d3d6db;letter-spacing:-0.123px;-webkit-text-stroke:0.22px #d3d6db;left:189.20px;"><span id="lg13">wrongpassword</span></div>
<div class="t" style="font-size:7.75px;line-height:7.75px;top:385.74px;color:#d3d6db;letter-spacing:-0.143px;-webkit-text-stroke:0.22px #d3d6db;left:260.80px;"><span id="lg14">password<i>_</i>login<i>_</i>forbidden</span></div>
</body></html>
